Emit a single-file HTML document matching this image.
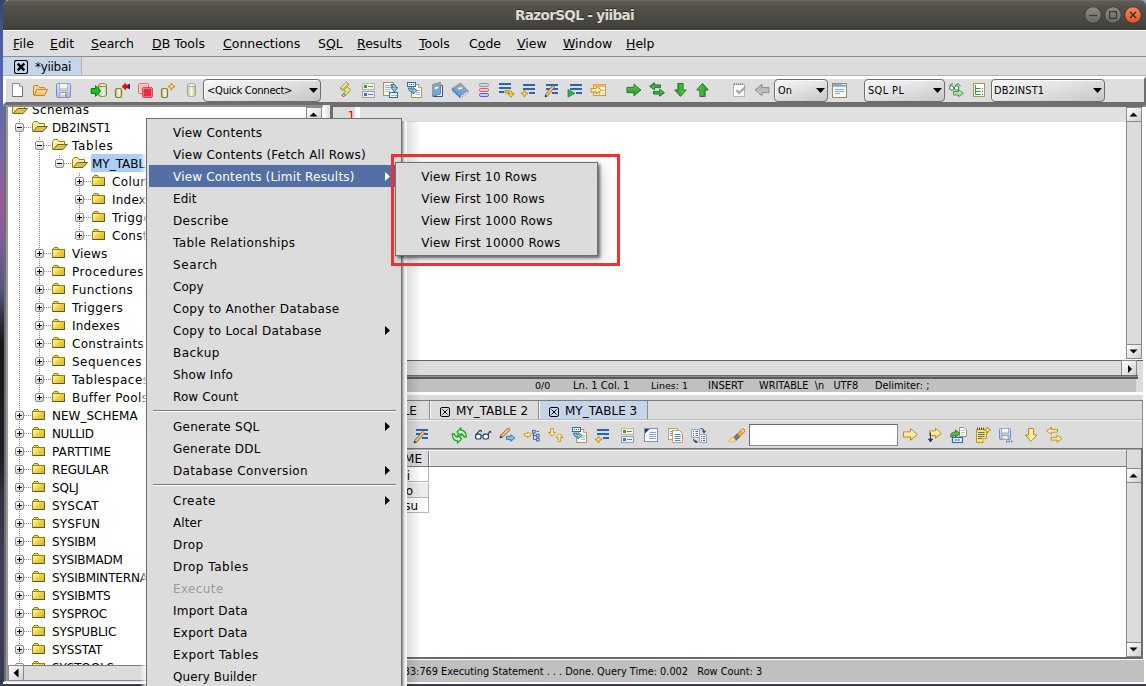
<!DOCTYPE html><html><head><meta charset="utf-8"><title>RazorSQL - yiibai</title><style>
*{box-sizing:border-box}
html,body{margin:0;padding:0}
body{width:1146px;height:686px;overflow:hidden;position:relative;background:#dcdcdc;font-family:"DejaVu Sans","Liberation Sans",sans-serif;font-size:13px;color:#000}
.a{position:absolute}
.t{position:absolute;white-space:nowrap;line-height:1}
.pm{font-size:12px;letter-spacing:.26px}
u{text-decoration:underline;text-underline-offset:1px}
</style></head><body>
<svg width="0" height="0" style="position:absolute"><defs>
<linearGradient id="gGreen" x1="0" y1="0" x2="0" y2="1"><stop offset="0" stop-color="#7fd36a"/><stop offset=".5" stop-color="#3fae3a"/><stop offset="1" stop-color="#2f9a30"/></linearGradient>
<linearGradient id="gYel" x1="0" y1="0" x2="0" y2="1"><stop offset="0" stop-color="#fffdf0"/><stop offset=".45" stop-color="#fff0b4"/><stop offset="1" stop-color="#f6c23e"/></linearGradient>
<linearGradient id="gGray" x1="0" y1="0" x2="0" y2="1"><stop offset="0" stop-color="#d0d0d0"/><stop offset="1" stop-color="#a8a8a8"/></linearGradient>
<linearGradient id="gCyl" x1="0" y1="0" x2="1" y2="0"><stop offset="0" stop-color="#b8b8b8"/><stop offset=".6" stop-color="#f6f6f6"/><stop offset="1" stop-color="#c0c0c0"/></linearGradient>
<linearGradient id="gCyl2" x1="0" y1="0" x2="1" y2="0"><stop offset="0" stop-color="#c8c8a0"/><stop offset=".5" stop-color="#fafae6"/><stop offset="1" stop-color="#b8b890"/></linearGradient>
<linearGradient id="gSave" x1="0" y1="0" x2="0" y2="1"><stop offset="0" stop-color="#dbe6f5"/><stop offset="1" stop-color="#a9c0e2"/></linearGradient>
<linearGradient id="gFold" x1="0" y1="0" x2="0" y2="1"><stop offset="0" stop-color="#fde2a6"/><stop offset="1" stop-color="#f4b85a"/></linearGradient>
<linearGradient id="gBtn" x1="0" y1="0" x2="1" y2="1"><stop offset="0" stop-color="#ffffff"/><stop offset="1" stop-color="#cccccc"/></linearGradient>
<linearGradient id="gBlue" x1="0" y1="0" x2="0" y2="1"><stop offset="0" stop-color="#8fc0ee"/><stop offset="1" stop-color="#4f8fd6"/></linearGradient>
<linearGradient id="gTeal" x1="0" y1="0" x2="0" y2="1"><stop offset="0" stop-color="#7fb4dc"/><stop offset="1" stop-color="#a8dcb0"/></linearGradient>
<linearGradient id="fc" gradientUnits="userSpaceOnUse" x1="1" y1="2.5" x2="9" y2="10.5"><stop offset="0" stop-color="#ffffff"/><stop offset=".18" stop-color="#fff36a"/><stop offset=".4" stop-color="#ffdc9a"/><stop offset=".5" stop-color="#f4d648"/><stop offset="1" stop-color="#dcbc3c"/></linearGradient>
<linearGradient id="tg" x1="0" y1="0" x2="0" y2="1"><stop offset="0" stop-color="#fff"/><stop offset="1" stop-color="#d6d2c6"/></linearGradient>
</defs></svg>
<div class="a" style="left:0;top:0;width:6px;height:686px;background:linear-gradient(#33446e 0,#42538c 4%,#4c5fa2 6%,#5a68aa 14%,#7668aa 22%,#9a5c98 30%,#7a5c98 36%,#54587e 42%,#2a2c38 47%,#16161c 50%,#1c1c24 66%,#34303f 72%,#403b52 80%,#3c4058 90%,#343a50 100%)"></div>
<div class="a" style="left:1140px;top:0;width:6px;height:10px;background:#8fa0d0"></div>
<div class="a" style="left:3px;top:0;width:1143px;height:30px;border-radius:6px 6px 0 0;background:linear-gradient(#5f5c55 0,#55524b 20%,#403f3a 100%);border-top:1px solid #6a675f"></div>
<div class="t" style="left:3px;width:1143px;top:8.5px;text-align:center;font-weight:bold;font-size:13.6px;letter-spacing:-.68px;color:#dfdbd2;text-shadow:0 -1px 0 #2a2925">RazorSQL - yiibai</div>
<svg class="a" style="left:1083px;top:5px" width="20" height="20" viewBox="0 0 20 20"><defs><linearGradient id="ggmin" x1="0" y1="0" x2="0" y2="1"><stop offset="0" stop-color="#8d8a82"/><stop offset="1" stop-color="#6b6962"/></linearGradient></defs><circle cx="10" cy="10" r="8.6" fill="#3a3934"/><circle cx="10" cy="10" r="7.8" fill="url(#ggmin)"/><path d="M6 10.5H14" stroke="#3c3b37" stroke-width="1.3"/></svg>
<svg class="a" style="left:1103px;top:5px" width="20" height="20" viewBox="0 0 20 20"><defs><linearGradient id="ggmax" x1="0" y1="0" x2="0" y2="1"><stop offset="0" stop-color="#8d8a82"/><stop offset="1" stop-color="#6b6962"/></linearGradient></defs><circle cx="10" cy="10" r="8.6" fill="#3a3934"/><circle cx="10" cy="10" r="7.8" fill="url(#ggmax)"/><rect x="6.6" y="6.6" width="6.8" height="6.8" fill="none" stroke="#3c3b37" stroke-width="1.3"/></svg>
<svg class="a" style="left:1123px;top:5px" width="20" height="20" viewBox="0 0 20 20"><defs><linearGradient id="gc" x1="0" y1="0" x2="0" y2="1"><stop offset="0" stop-color="#f08763"/><stop offset="1" stop-color="#e8541e"/></linearGradient></defs><circle cx="10" cy="10" r="8.6" fill="#3a3934"/><circle cx="10" cy="10" r="7.8" fill="url(#gc)"/><path d="M7 7L13 13M13 7L7 13" stroke="#3c2a1c" stroke-width="1.3" fill="none"/></svg>
<div class="a" style="left:3px;top:30px;width:1143px;height:26px;background:#dedede;border-top:1px solid #fff"></div>
<div class="a" style="left:3px;top:56px;width:1143px;height:1px;background:#8c8c8c"></div>
<div class="t" style="left:13px;top:37.5px;font-size:12.5px"><u>F</u>ile</div>
<div class="t" style="left:50px;top:37.5px;font-size:12.5px"><u>E</u>dit</div>
<div class="t" style="left:91px;top:37.5px;font-size:12.5px"><u>S</u>earch</div>
<div class="t" style="left:152px;top:37.5px;font-size:12.5px"><u>D</u>B Tools</div>
<div class="t" style="left:223px;top:37.5px;font-size:12.5px"><u>C</u>onnections</div>
<div class="t" style="left:318px;top:37.5px;font-size:12.5px">S<u>Q</u>L</div>
<div class="t" style="left:357px;top:37.5px;font-size:12.5px"><u>R</u>esults</div>
<div class="t" style="left:419px;top:37.5px;font-size:12.5px"><u>T</u>ools</div>
<div class="t" style="left:469px;top:37.5px;font-size:12.5px">C<u>o</u>de</div>
<div class="t" style="left:517px;top:37.5px;font-size:12.5px"><u>V</u>iew</div>
<div class="t" style="left:563px;top:37.5px;font-size:12.5px"><u>W</u>indow</div>
<div class="t" style="left:626px;top:37.5px;font-size:12.5px"><u>H</u>elp</div>
<div class="a" style="left:3px;top:57px;width:79px;height:18px;background:#c5d6eb;border-right:1px solid #a9b4c2"></div>
<div class="a" style="left:3px;top:75px;width:1143px;height:1px;background:#b4b4b4"></div>
<svg class="a" style="left:14px;top:60px" width="14" height="14" viewBox="0 0 14 14"><rect x=".5" y=".5" width="13" height="13" rx="2" fill="none" stroke="#000" stroke-width="1.1"/><path d="M3.7 3.7L10.3 10.3M10.3 3.7L3.7 10.3" stroke="#000" stroke-width="2.4"/></svg>
<div class="t" style="left:35px;top:61px;font-size:12px;letter-spacing:-.3px">*yiibai</div>
<div class="a" style="left:3px;top:76px;width:1143px;height:29px;background:#dedede;border-top:3px solid #fff;border-left:3px solid #fff;border-bottom:3px solid #6e6e6e;border-right:2px solid #6e6e6e"></div>
<div class="a" style="left:203px;top:79px;width:118px;height:23px;border:1px solid #6e6e6e;border-radius:4px;background:linear-gradient(165deg,#f8f8f8 0,#e4e4e4 45%,#c6c6c6 100%);box-shadow:inset 1px 1px 0 rgba(255,255,255,.8)"></div>
<div class="t" style="left:207px;top:86px;font-size:10px;letter-spacing:-0.29px">&lt;Quick Connect&gt;</div>
<svg class="a" style="left:309px;top:88px" width="9" height="5"><path d="M0 0H9L4.5 5Z" fill="#000"/></svg>
<div class="a" style="left:774px;top:79px;width:54px;height:23px;border:1px solid #6e6e6e;border-radius:4px;background:linear-gradient(165deg,#f8f8f8 0,#e4e4e4 45%,#c6c6c6 100%);box-shadow:inset 1px 1px 0 rgba(255,255,255,.8)"></div>
<div class="t" style="left:778px;top:86px;font-size:9.8px;letter-spacing:0px">On</div>
<svg class="a" style="left:816px;top:88px" width="9" height="5"><path d="M0 0H9L4.5 5Z" fill="#000"/></svg>
<div class="a" style="left:864px;top:79px;width:81px;height:23px;border:1px solid #6e6e6e;border-radius:4px;background:linear-gradient(165deg,#f8f8f8 0,#e4e4e4 45%,#c6c6c6 100%);box-shadow:inset 1px 1px 0 rgba(255,255,255,.8)"></div>
<div class="t" style="left:868px;top:86px;font-size:9.8px;letter-spacing:0.4px">SQL PL</div>
<svg class="a" style="left:933px;top:88px" width="9" height="5"><path d="M0 0H9L4.5 5Z" fill="#000"/></svg>
<div class="a" style="left:991px;top:79px;width:114px;height:23px;border:1px solid #6e6e6e;border-radius:4px;background:linear-gradient(165deg,#f8f8f8 0,#e4e4e4 45%,#c6c6c6 100%);box-shadow:inset 1px 1px 0 rgba(255,255,255,.8)"></div>
<div class="t" style="left:994px;top:86px;font-size:9.8px;letter-spacing:0.12px">DB2INST1</div>
<svg class="a" style="left:1093px;top:88px" width="9" height="5"><path d="M0 0H9L4.5 5Z" fill="#000"/></svg>
<svg class="a" style="left:12px;top:83px" width="11" height="14" viewBox="0 0 11 14"><path d="M.5 .5H7.5L10.5 3.5V13.5H.5Z" fill="#fff" stroke="#8c8c8c"/><path d="M7.5 .5V3.5H10.5" fill="#dfe6f2" stroke="#9a9a9a"/><path d="M.5 13.5H10.5V4" fill="none" stroke="#6e6e6e"/></svg><svg class="a" style="left:33px;top:85px" width="15" height="11" viewBox="0 0 15 11"><path d="M.5 10V2Q.5 .5 2 .5H5L6.5 2.5H11Q12 2.5 12 3.5V5" fill="#f9d38a" stroke="#c4872c"/><path d="M1 10.5L4 4.5H14.5L11.5 10.5Z" fill="url(#gFold)" stroke="#c4872c" stroke-linejoin="round"/></svg><svg class="a" style="left:56px;top:83px" width="15" height="15" viewBox="0 0 15 15"><rect x=".5" y=".5" width="14" height="14" rx="1.2" fill="url(#gSave)" stroke="#6d8ec4"/><rect x="3.5" y=".5" width="8" height="6.5" fill="#f6f8fc" stroke="#8aa4cc" stroke-width=".8"/><rect x="4" y="5" width="7" height="1.5" fill="#e8cf9a"/><rect x="4" y="9.5" width="7" height="5" fill="#f4f6fb" stroke="#7d98c6" stroke-width=".8"/><rect x="5" y="12" width="3.5" height="2" fill="#e8c77a"/><rect x="9" y="10.5" width="1.5" height="3.5" fill="#8a8a6a"/></svg><svg class="a" style="left:90px;top:82px" width="18" height="16" viewBox="0 0 18 16"><path d="M8.5 3.1V12.9A4.0 1.6 0 0 0 16.5 12.9V3.1" fill="url(#gCyl)" stroke="#8a8200"/><ellipse cx="12.5" cy="3.1" rx="4.0" ry="1.6" fill="#f4f4ea" stroke="#8a8200"/><path d="M1.2 6.5H5.5V3.6L10.6 9L5.5 14.4V11.5H1.2Z" fill="#0fc81a" stroke="#0a6a10" stroke-width=".9" stroke-linejoin="round"/></svg><svg class="a" style="left:114px;top:82px" width="17" height="17" viewBox="0 0 17 17"><rect x="1.5" y="6.5" width="6.0" height="9.0" rx="2" ry="1.6" fill="url(#gCyl)" stroke="#8a8200" stroke-width="1.2"/><path d="M8 4.5L11.5 1.2V3H15.5V6H11.5V7.8Z" fill="#f01010" stroke="#801010" stroke-width=".6"/><rect x="14.5" y="2" width="1.5" height="5" fill="#1a1a8a"/></svg><svg class="a" style="left:137px;top:82px" width="17" height="17" viewBox="0 0 17 17"><rect x="1.5" y="1.5" width="10" height="10" rx="1.5" fill="#f7b4b8" stroke="#e46a72"/><rect x="2.5" y="2.5" width="8" height="8" fill="none" stroke="#fbdadc"/><rect x="5.5" y="5.5" width="10" height="10" rx="1.5" fill="#e62e40" stroke="#e2485a"/><rect x="6.5" y="6.5" width="8" height="8" fill="none" stroke="#f07a86" stroke-width=".8"/></svg><svg class="a" style="left:160px;top:82px" width="17" height="17" viewBox="0 0 17 17"><rect x="1.5" y="6.5" width="6.0" height="9.0" rx="2" ry="1.6" fill="url(#gCyl)" stroke="#8a8200" stroke-width="1.2"/><path d="M11.5 0.9L12.6 3.4L15.1 4.5L12.6 5.6L11.5 8.1L10.4 5.6L7.9 4.5L10.4 3.4Z" fill="#f4c23c" stroke="#b8861a" stroke-width=".8"/><circle cx="11.5" cy="4.5" r="1" fill="#fff8d8"/></svg><svg class="a" style="left:186px;top:82px" width="11" height="16" viewBox="0 0 11 16"><path d="M1.5 3.1V12.9A4.0 1.6 0 0 0 9.5 12.9V3.1" fill="url(#gCyl2)" stroke="#a4a484"/><ellipse cx="5.5" cy="3.1" rx="4.0" ry="1.6" fill="#f4f4ea" stroke="#a4a484"/></svg><svg class="a" style="left:339px;top:81px" width="13" height="17" viewBox="0 0 13 17"><path d="M4 9L8.5 6L11.5 8.5L11 10.5L6.5 14L4.5 12.5L6.5 10.5Z" fill="#efe25c" stroke="#3c4c8c" stroke-width=".9" stroke-dasharray="1 .8"/><path d="M1.5 6.5L7.5 1L9.500 2.500V4.500L3.800 9.500L1.500 8Z" fill="#e6ecb0" stroke="#a08a34" stroke-width=".9" stroke-linejoin="round"/><path d="M1.500 6.500L3.800 8L9.500 2.800" fill="none" stroke="#a08a34" stroke-width=".7"/><rect x="3.300" y="12.800" width="2.600" height="2.600" fill="#f6e23c" stroke="#3c4c8c" stroke-width=".8" transform="rotate(45 4.600 14.100)"/></svg><svg class="a" style="left:362px;top:83px" width="13" height="15" viewBox="0 0 13 15" shape-rendering="crispEdges"><rect x=".5" y=".5" width="12" height="6" fill="#eef6f2" stroke="#c8b888"/><rect x="2" y="2" width="3" height="3" fill="#2e9e3e"/><rect x="6" y="3" width="5" height="1" fill="#3aa84a"/><rect x=".5" y="8.5" width="12" height="6" fill="#eaf0f8" stroke="#8ea4c6"/><rect x="2" y="10" width="3" height="3" fill="#5e6ea4"/><rect x="6" y="11" width="5" height="1" fill="#6a7ab0"/></svg><svg class="a" style="left:383px;top:82px" width="15" height="16" viewBox="0 0 15 16"><rect x=".5" y=".5" width="10" height="13" fill="#fff" stroke="#b4944c"/><path d="M2 3.5H8M2 5.5H8M2 7.5H8M2 9.5H7" stroke="#9ab8dc" stroke-width="1"/><path d="M8 2.5H11.5Q13 3 13 5.5H14.5L11.5 10L8 5.5H10Q10 4 8 4Z" fill="url(#gTeal)" stroke="#2468ac" stroke-width=".9" stroke-linejoin="round"/><rect x="6.5" y="10.5" width="8" height="5" fill="#fff" stroke="#2e6cb4"/><path d="M8.5 13.5H9.5M10.5 13.5H11.5M12.5 13.5H13.5" stroke="#2e6cb4"/></svg><svg class="a" style="left:407px;top:82px" width="15" height="16" viewBox="0 0 15 16"><path d="M4.5 2.5H11.5L14.5 5.5V15.5H4.5Z" fill="#fff" stroke="#b4944c"/><path d="M11.5 2.5V5.5H14.5" fill="#f4e8c8" stroke="#b4944c" stroke-width=".8"/><path d="M9 8.5H13M9 10.5H13M9 12.5H13" stroke="#9ab8dc"/><rect x=".5" y=".5" width="8" height="4" fill="#fff" stroke="#2e6cb4"/><path d="M2 2.5H3M4 2.5H5M6 2.5H7" stroke="#2e6cb4"/><path d="M1.5 6Q1.5 10 6 10V12L10 8.5L6 5.5V7.5Q4 7.5 3.5 6Z" fill="url(#gTeal)" stroke="#2468ac" stroke-width=".9" stroke-linejoin="round"/></svg><svg class="a" style="left:431px;top:81px" width="13" height="17" viewBox="0 0 13 17"><path d="M9.500 4L11.500 4.500V15.500H2.500L1.500 15" fill="#fff" stroke="#2a3a5a" stroke-width=".9"/><path d="M1.500 3.500L9.500 1.200V13L1.500 15Z" fill="#6aa8f0" stroke="#a89264" stroke-width=".9" stroke-linejoin="round"/><path d="M1.500 15L9.500 13V4" fill="none" stroke="#4a7cc0" stroke-width=".8"/><rect x="3.300" y="5.500" width="4.500" height="2.600" fill="#fff" stroke="#b8a06a" stroke-width=".8" transform="skewY(-14)" transform-origin="5.500 6.800"/></svg><svg class="a" style="left:451px;top:82px" width="18" height="16" viewBox="0 0 18 16"><path d="M9 14.500L17 9V11L9.500 15.800Z" fill="#fff" stroke="#3a4a6a" stroke-width=".8" stroke-dasharray="1 1"/><path d="M1.200 6.500L9.500 1L17 8.500L8.800 14.200Z" fill="#6aa8f0" stroke="#a89264" stroke-width=".9" stroke-linejoin="round"/><path d="M1.200 6.500V8.500L9 15.800V14.200Z" fill="#4f8fe0" stroke="#4a7cc0" stroke-width=".7"/><path d="M3 6.200L10 12.500" stroke="#3e78c8" stroke-width=".8" stroke-dasharray="1 1"/><rect x="6.800" y="5" width="4.600" height="2.600" fill="#fff" stroke="#b8a06a" stroke-width=".8" transform="rotate(-12 9 6.300)"/></svg><svg class="a" style="left:479px;top:83px" width="10" height="14" viewBox="0 0 10 14"><rect x=".5" y=".5" width="9" height="3" rx="1.3" fill="#dcdcc4" stroke="#8494c4"/><rect x=".5" y="5.5" width="9" height="3" rx="1.3" fill="#f8c4c4" stroke="#d4605e"/><rect x=".5" y="10.5" width="9" height="3" rx="1.3" fill="#c4ccf8" stroke="#4e5ee0"/></svg><svg class="a" style="left:499px;top:83px" width="16" height="15" viewBox="0 0 16 15"><rect x="0" y="0" width="12" height="2" fill="#2a64b4"/><rect x="0" y="4" width="12" height="2" fill="#2a64b4"/><rect x="0" y="8" width="5" height="2" fill="#2a64b4"/><path d="M6 7.5H9.5Q13.5 7.5 13.5 10.5L15.2 10.5L12 14.3L8.5 10.5H10.5Q10.5 9.8 9.5 9.8H6Z" fill="#f6c644" stroke="#b07c18" stroke-width=".8" stroke-linejoin="round"/></svg><svg class="a" style="left:520px;top:83px" width="16" height="15" viewBox="0 0 16 15"><rect x="3" y="1" width="12" height="2" fill="#2a64b4"/><rect x="3" y="5" width="12" height="2" fill="#2a64b4"/><rect x="9" y="9" width="6" height="2" fill="#2a64b4"/><path d="M4.5 6.9L5.6 9.4L8.1 10.5L5.6 11.6L4.5 14.1L3.4 11.6L0.9 10.5L3.4 9.4Z" fill="#f4c23c" stroke="#b8861a" stroke-width=".8"/><circle cx="4.5" cy="10.5" r="1" fill="#fff8d8"/></svg><svg class="a" style="left:544px;top:83px" width="15" height="15" viewBox="0 0 15 15"><rect x="2" y="1" width="12" height="2" fill="#2a64b4"/><rect x="2" y="5" width="12" height="2" fill="#2a64b4"/><rect x="8" y="9" width="6" height="2" fill="#2a64b4"/><path d="M2.5 12.3L9.0 4.0" stroke="#8a6a3a" stroke-width="3.4" stroke-linecap="round"/><path d="M2.7 12.1L9.0 4.0" stroke="#f0c67a" stroke-width="2" stroke-linecap="round"/><path d="M1.5 13.5L2.1 12.8" stroke="#1e3a6e" stroke-width="1.6" stroke-linecap="round"/></svg><svg class="a" style="left:567px;top:83px" width="16" height="15" viewBox="0 0 16 15"><rect x="3" y="1" width="12" height="2" fill="#2a64b4"/><rect x="3" y="5" width="12" height="2" fill="#2a64b4"/><rect x="9" y="9" width="6" height="2" fill="#2a64b4"/><path d="M1 6.5L8 10.3L1 14.2Z" fill="#34a852" stroke="#1e7a36" stroke-width=".7"/></svg><svg class="a" style="left:590px;top:83px" width="17" height="14" viewBox="0 0 17 14"><rect x="3.5" y="1.5" width="12" height="11" fill="#fff" stroke="#e0922e"/><rect x="3.5" y="1.5" width="12" height="2.5" fill="#f4b45a"/><path d="M3.5 7.5H15.5M3.5 10H15.5M9.5 4V12.5" stroke="#e4a85a" stroke-width=".8"/><g transform="translate(0.5,3)"><path d="M.5 2.5H6.0V.7L11.4 4.2L6.0 7.8V6.0H.5Z" fill="url(#gYel)" stroke="#b8861a" stroke-width="0.8" stroke-linejoin="round"/></g></svg><svg class="a" style="left:626px;top:83px" width="16" height="14" viewBox="0 0 16 14"><g transform="translate(.5,.5)"><path d="M.5 3.9H7.5V.7L14.4 6.5L7.5 12.3V9.1H.5Z" fill="url(#gGreen)" stroke="#1f7a22" stroke-width="1" stroke-linejoin="round"/></g></svg><svg class="a" style="left:648px;top:81px" width="18" height="17" viewBox="0 0 18 17"><g transform="translate(1,.5) rotate(180 6 4.5)"><path d="M.5 2.9H6.6V.7L11.4 4.2L6.6 7.8V5.6H.5Z" fill="url(#gGreen)" stroke="#1f7a22" stroke-width="1" stroke-linejoin="round"/></g><g transform="translate(5,7.5)"><path d="M.5 2.9H6.6V.7L11.4 4.2L6.6 7.8V5.6H.5Z" fill="url(#gGreen)" stroke="#1f7a22" stroke-width="1" stroke-linejoin="round"/></g></svg><svg class="a" style="left:673px;top:82px" width="14" height="16" viewBox="0 0 14 16"><g transform="translate(0,1) rotate(90 7 7)"><path d="M.5 3.9H7.0V.7L13.4 6.5L7.0 12.3V9.1H.5Z" fill="url(#gGreen)" stroke="#1f7a22" stroke-width="1" stroke-linejoin="round"/></g></svg><svg class="a" style="left:696px;top:82px" width="14" height="16" viewBox="0 0 14 16"><g transform="translate(0,1) rotate(-90 7 7)"><path d="M.5 3.9H7.0V.7L13.4 6.5L7.0 12.3V9.1H.5Z" fill="url(#gGreen)" stroke="#1f7a22" stroke-width="1" stroke-linejoin="round"/></g></svg><svg class="a" style="left:733px;top:82px" width="14" height="15" viewBox="0 0 14 15"><rect x=".5" y="2.5" width="11" height="12" fill="#fbfbfb" stroke="#b4b4b4"/><path d="M1.5 1V3M3.5 1V3M5.5 1V3M7.5 1V3M9.5 1V3" stroke="#8a8a8a" stroke-width=".9"/><path d="M3.5 8L6 11L12.5 5" fill="none" stroke="#a6a6a6" stroke-width="2.2"/></svg><svg class="a" style="left:754px;top:83px" width="16" height="14" viewBox="0 0 16 14"><g transform="translate(.5,.5) rotate(180 7.5 6.5)"><path d="M.5 3.9H7.5V.7L14.4 6.5L7.5 12.3V9.1H.5Z" fill="url(#gGray)" stroke="#8e8e8e" stroke-width="1" stroke-linejoin="round"/></g></svg><svg class="a" style="left:832px;top:83px" width="15" height="15" viewBox="0 0 15 15"><rect x=".5" y=".5" width="14" height="14" fill="#f4faff" stroke="#a08a58"/><rect x="1" y="1" width="13" height="2.5" fill="url(#gBlue)"/><rect x="10" y="1" width="4" height="1.2" fill="#d6ecfc"/><path d="M3 6.5H12M3 8.5H12M3 10.5H8" stroke="#8aa4c8"/></svg><svg class="a" style="left:948px;top:82px" width="17" height="16" viewBox="0 0 17 16"><circle cx="3.7" cy="6" r="2.2" fill="#fff" stroke="#2e7e42"/><circle cx="8.6" cy="6" r="2.2" fill="#fff" stroke="#2e7e42"/><path d="M1.8 4.5Q2.5 1 5 1.5M7 4.2Q8.5 1.3 10.5 2Q12.3 2.5 12 4.5" fill="none" stroke="#2e7e42" stroke-width=".9"/><g transform="translate(5,7)"><path d="M.5 2.5H5.5V.7L10.4 4.2L5.5 7.8V6.0H.5Z" fill="#b8dca0" stroke="#2aa03c" stroke-width="0.9" stroke-linejoin="round"/></g></svg><svg class="a" style="left:973px;top:83px" width="12" height="14" viewBox="0 0 12 14"><rect x=".5" y=".5" width="11" height="13" fill="#fbfdff" stroke="#b8924a"/><path d="M2.5 2V11.5M2.5 5.5H7.5M2.5 8.5H7.5M2.5 11.5H7.5" fill="none" stroke="#2e9a52"/><path d="M9 5.5H10M9 8.5H10M9 11.5H10" stroke="#2e9a52"/></svg>
<div class="a" style="left:3px;top:105px;width:1143px;height:2px;background:#868686"></div>
<div class="a" style="left:4px;top:105px;width:319px;height:578px;background:#fff;border-left:2px solid #6e6e6e;border-top:2px solid #8c8c8c"></div>
<div class="a" style="left:6px;top:105px;width:2px;height:576px;background:#9a9a9a"></div>
<div class="a" style="left:7px;top:107px;width:299px;height:558px;overflow:hidden">
<div class="a" style="left:12px;top:12px;width:1px;height:561px;background-image:linear-gradient(#8c8c8c 50%,transparent 50%);background-size:1px 2px"></div>
<div class="a" style="left:32px;top:30px;width:1px;height:265px;background-image:linear-gradient(#8c8c8c 50%,transparent 50%);background-size:1px 2px"></div>
<div class="a" style="left:52px;top:48px;width:1px;height:4px;background-image:linear-gradient(#8c8c8c 50%,transparent 50%);background-size:1px 2px"></div>
<div class="a" style="left:72px;top:66px;width:1px;height:67px;background-image:linear-gradient(#8c8c8c 50%,transparent 50%);background-size:1px 2px"></div>
<svg class="a" style="left:5px;top:-4px" width="16" height="11" viewBox="0 0 16 11"><path d="M0.5 10.5V2.5L2 0.5H5.5L7 2.5H12.5V5.5" fill="#fcf0a8" stroke="#8e8600"/><path d="M1.2 10.5L5.5 5.5H15.5L11 10.5Z" fill="#dfc040" stroke="#5a5630" stroke-width=".9"/></svg>
<div class="t" style="left:25px;top:-3px;font-size:12px;letter-spacing:0.4px">Schemas</div>
<div class="a" style="left:17px;top:20px;width:7px;height:1px;background-image:linear-gradient(90deg,#8c8c8c 50%,transparent 50%);background-size:2px 1px"></div>
<svg class="a" style="left:8px;top:16px" width="9" height="9" viewBox="0 0 9 9"><rect x=".5" y=".5" width="8" height="8" rx="1.5" fill="url(#tg)" stroke="#8c8c8c"/><rect x="2" y="4" width="5" height="1" fill="#000"/></svg>
<svg class="a" style="left:25px;top:14px" width="16" height="11" viewBox="0 0 16 11"><path d="M0.5 10.5V2.5L2 0.5H5.5L7 2.5H12.5V5.5" fill="#fcf0a8" stroke="#8e8600"/><path d="M1.2 10.5L5.5 5.5H15.5L11 10.5Z" fill="#dfc040" stroke="#5a5630" stroke-width=".9"/></svg>
<div class="t" style="left:45px;top:15px;font-size:12px;letter-spacing:-0.18px">DB2INST1</div>
<div class="a" style="left:37px;top:38px;width:7px;height:1px;background-image:linear-gradient(90deg,#8c8c8c 50%,transparent 50%);background-size:2px 1px"></div>
<svg class="a" style="left:28px;top:34px" width="9" height="9" viewBox="0 0 9 9"><rect x=".5" y=".5" width="8" height="8" rx="1.5" fill="url(#tg)" stroke="#8c8c8c"/><rect x="2" y="4" width="5" height="1" fill="#000"/></svg>
<svg class="a" style="left:45px;top:32px" width="16" height="11" viewBox="0 0 16 11"><path d="M0.5 10.5V2.5L2 0.5H5.5L7 2.5H12.5V5.5" fill="#fcf0a8" stroke="#8e8600"/><path d="M1.2 10.5L5.5 5.5H15.5L11 10.5Z" fill="#dfc040" stroke="#5a5630" stroke-width=".9"/></svg>
<div class="t" style="left:65px;top:33px;font-size:12px;letter-spacing:0.7px">Tables</div>
<div class="a" style="left:57px;top:56px;width:7px;height:1px;background-image:linear-gradient(90deg,#8c8c8c 50%,transparent 50%);background-size:2px 1px"></div>
<svg class="a" style="left:48px;top:52px" width="9" height="9" viewBox="0 0 9 9"><rect x=".5" y=".5" width="8" height="8" rx="1.5" fill="url(#tg)" stroke="#8c8c8c"/><rect x="2" y="4" width="5" height="1" fill="#000"/></svg>
<svg class="a" style="left:65px;top:50px" width="16" height="11" viewBox="0 0 16 11"><path d="M0.5 10.5V2.5L2 0.5H5.5L7 2.5H12.5V5.5" fill="#fcf0a8" stroke="#8e8600"/><path d="M1.2 10.5L5.5 5.5H15.5L11 10.5Z" fill="#dfc040" stroke="#5a5630" stroke-width=".9"/></svg>
<div class="a" style="left:84px;top:47px;width:70px;height:18px;background:#abcef4"></div>
<div class="t" style="left:85px;top:51px;font-size:12px;letter-spacing:0px">MY_TABLE</div>
<div class="a" style="left:77px;top:74px;width:7px;height:1px;background-image:linear-gradient(90deg,#8c8c8c 50%,transparent 50%);background-size:2px 1px"></div>
<svg class="a" style="left:68px;top:70px" width="9" height="9" viewBox="0 0 9 9"><rect x=".5" y=".5" width="8" height="8" rx="1.5" fill="url(#tg)" stroke="#8c8c8c"/><rect x="2" y="4" width="5" height="1" fill="#000"/><rect x="4" y="2" width="1" height="5" fill="#000"/></svg>
<svg class="a" style="left:85px;top:68px" width="13" height="11" viewBox="0 0 13 11" shape-rendering="crispEdges"><rect x="2" y="0" width="4" height="1" fill="#8e8600"/><rect x="1" y="1" width="6" height="1" fill="#e8d56a"/><rect x="1" y="1" width="1" height="1" fill="#8e8a40"/><rect x="6" y="1" width="1" height="1" fill="#8e8a40"/><rect x="0" y="2" width="13" height="9" fill="#8e8600"/><rect x="1" y="3" width="11" height="7" fill="url(#fc)"/><rect x="1" y="10" width="12" height="1" fill="#5e5a2c"/><rect x="12" y="3" width="1" height="8" fill="#6a6428"/></svg>
<div class="t" style="left:105px;top:69px;font-size:12px;letter-spacing:0.4px">Columns</div>
<div class="a" style="left:77px;top:92px;width:7px;height:1px;background-image:linear-gradient(90deg,#8c8c8c 50%,transparent 50%);background-size:2px 1px"></div>
<svg class="a" style="left:68px;top:88px" width="9" height="9" viewBox="0 0 9 9"><rect x=".5" y=".5" width="8" height="8" rx="1.5" fill="url(#tg)" stroke="#8c8c8c"/><rect x="2" y="4" width="5" height="1" fill="#000"/><rect x="4" y="2" width="1" height="5" fill="#000"/></svg>
<svg class="a" style="left:85px;top:86px" width="13" height="11" viewBox="0 0 13 11" shape-rendering="crispEdges"><rect x="2" y="0" width="4" height="1" fill="#8e8600"/><rect x="1" y="1" width="6" height="1" fill="#e8d56a"/><rect x="1" y="1" width="1" height="1" fill="#8e8a40"/><rect x="6" y="1" width="1" height="1" fill="#8e8a40"/><rect x="0" y="2" width="13" height="9" fill="#8e8600"/><rect x="1" y="3" width="11" height="7" fill="url(#fc)"/><rect x="1" y="10" width="12" height="1" fill="#5e5a2c"/><rect x="12" y="3" width="1" height="8" fill="#6a6428"/></svg>
<div class="t" style="left:105px;top:87px;font-size:12px;letter-spacing:0.23px">Indexes</div>
<div class="a" style="left:77px;top:110px;width:7px;height:1px;background-image:linear-gradient(90deg,#8c8c8c 50%,transparent 50%);background-size:2px 1px"></div>
<svg class="a" style="left:68px;top:106px" width="9" height="9" viewBox="0 0 9 9"><rect x=".5" y=".5" width="8" height="8" rx="1.5" fill="url(#tg)" stroke="#8c8c8c"/><rect x="2" y="4" width="5" height="1" fill="#000"/><rect x="4" y="2" width="1" height="5" fill="#000"/></svg>
<svg class="a" style="left:85px;top:104px" width="13" height="11" viewBox="0 0 13 11" shape-rendering="crispEdges"><rect x="2" y="0" width="4" height="1" fill="#8e8600"/><rect x="1" y="1" width="6" height="1" fill="#e8d56a"/><rect x="1" y="1" width="1" height="1" fill="#8e8a40"/><rect x="6" y="1" width="1" height="1" fill="#8e8a40"/><rect x="0" y="2" width="13" height="9" fill="#8e8600"/><rect x="1" y="3" width="11" height="7" fill="url(#fc)"/><rect x="1" y="10" width="12" height="1" fill="#5e5a2c"/><rect x="12" y="3" width="1" height="8" fill="#6a6428"/></svg>
<div class="t" style="left:105px;top:105px;font-size:12px;letter-spacing:0.46px">Triggers</div>
<div class="a" style="left:77px;top:128px;width:7px;height:1px;background-image:linear-gradient(90deg,#8c8c8c 50%,transparent 50%);background-size:2px 1px"></div>
<svg class="a" style="left:68px;top:124px" width="9" height="9" viewBox="0 0 9 9"><rect x=".5" y=".5" width="8" height="8" rx="1.5" fill="url(#tg)" stroke="#8c8c8c"/><rect x="2" y="4" width="5" height="1" fill="#000"/><rect x="4" y="2" width="1" height="5" fill="#000"/></svg>
<svg class="a" style="left:85px;top:122px" width="13" height="11" viewBox="0 0 13 11" shape-rendering="crispEdges"><rect x="2" y="0" width="4" height="1" fill="#8e8600"/><rect x="1" y="1" width="6" height="1" fill="#e8d56a"/><rect x="1" y="1" width="1" height="1" fill="#8e8a40"/><rect x="6" y="1" width="1" height="1" fill="#8e8a40"/><rect x="0" y="2" width="13" height="9" fill="#8e8600"/><rect x="1" y="3" width="11" height="7" fill="url(#fc)"/><rect x="1" y="10" width="12" height="1" fill="#5e5a2c"/><rect x="12" y="3" width="1" height="8" fill="#6a6428"/></svg>
<div class="t" style="left:105px;top:123px;font-size:12px;letter-spacing:0.32px">Constraints</div>
<div class="a" style="left:37px;top:146px;width:7px;height:1px;background-image:linear-gradient(90deg,#8c8c8c 50%,transparent 50%);background-size:2px 1px"></div>
<svg class="a" style="left:28px;top:142px" width="9" height="9" viewBox="0 0 9 9"><rect x=".5" y=".5" width="8" height="8" rx="1.5" fill="url(#tg)" stroke="#8c8c8c"/><rect x="2" y="4" width="5" height="1" fill="#000"/><rect x="4" y="2" width="1" height="5" fill="#000"/></svg>
<svg class="a" style="left:45px;top:140px" width="13" height="11" viewBox="0 0 13 11" shape-rendering="crispEdges"><rect x="2" y="0" width="4" height="1" fill="#8e8600"/><rect x="1" y="1" width="6" height="1" fill="#e8d56a"/><rect x="1" y="1" width="1" height="1" fill="#8e8a40"/><rect x="6" y="1" width="1" height="1" fill="#8e8a40"/><rect x="0" y="2" width="13" height="9" fill="#8e8600"/><rect x="1" y="3" width="11" height="7" fill="url(#fc)"/><rect x="1" y="10" width="12" height="1" fill="#5e5a2c"/><rect x="12" y="3" width="1" height="8" fill="#6a6428"/></svg>
<div class="t" style="left:65px;top:141px;font-size:12px;letter-spacing:0.11px">Views</div>
<div class="a" style="left:37px;top:164px;width:7px;height:1px;background-image:linear-gradient(90deg,#8c8c8c 50%,transparent 50%);background-size:2px 1px"></div>
<svg class="a" style="left:28px;top:160px" width="9" height="9" viewBox="0 0 9 9"><rect x=".5" y=".5" width="8" height="8" rx="1.5" fill="url(#tg)" stroke="#8c8c8c"/><rect x="2" y="4" width="5" height="1" fill="#000"/><rect x="4" y="2" width="1" height="5" fill="#000"/></svg>
<svg class="a" style="left:45px;top:158px" width="13" height="11" viewBox="0 0 13 11" shape-rendering="crispEdges"><rect x="2" y="0" width="4" height="1" fill="#8e8600"/><rect x="1" y="1" width="6" height="1" fill="#e8d56a"/><rect x="1" y="1" width="1" height="1" fill="#8e8a40"/><rect x="6" y="1" width="1" height="1" fill="#8e8a40"/><rect x="0" y="2" width="13" height="9" fill="#8e8600"/><rect x="1" y="3" width="11" height="7" fill="url(#fc)"/><rect x="1" y="10" width="12" height="1" fill="#5e5a2c"/><rect x="12" y="3" width="1" height="8" fill="#6a6428"/></svg>
<div class="t" style="left:65px;top:159px;font-size:12px;letter-spacing:0.55px">Procedures</div>
<div class="a" style="left:37px;top:182px;width:7px;height:1px;background-image:linear-gradient(90deg,#8c8c8c 50%,transparent 50%);background-size:2px 1px"></div>
<svg class="a" style="left:28px;top:178px" width="9" height="9" viewBox="0 0 9 9"><rect x=".5" y=".5" width="8" height="8" rx="1.5" fill="url(#tg)" stroke="#8c8c8c"/><rect x="2" y="4" width="5" height="1" fill="#000"/><rect x="4" y="2" width="1" height="5" fill="#000"/></svg>
<svg class="a" style="left:45px;top:176px" width="13" height="11" viewBox="0 0 13 11" shape-rendering="crispEdges"><rect x="2" y="0" width="4" height="1" fill="#8e8600"/><rect x="1" y="1" width="6" height="1" fill="#e8d56a"/><rect x="1" y="1" width="1" height="1" fill="#8e8a40"/><rect x="6" y="1" width="1" height="1" fill="#8e8a40"/><rect x="0" y="2" width="13" height="9" fill="#8e8600"/><rect x="1" y="3" width="11" height="7" fill="url(#fc)"/><rect x="1" y="10" width="12" height="1" fill="#5e5a2c"/><rect x="12" y="3" width="1" height="8" fill="#6a6428"/></svg>
<div class="t" style="left:65px;top:177px;font-size:12px;letter-spacing:0.44px">Functions</div>
<div class="a" style="left:37px;top:200px;width:7px;height:1px;background-image:linear-gradient(90deg,#8c8c8c 50%,transparent 50%);background-size:2px 1px"></div>
<svg class="a" style="left:28px;top:196px" width="9" height="9" viewBox="0 0 9 9"><rect x=".5" y=".5" width="8" height="8" rx="1.5" fill="url(#tg)" stroke="#8c8c8c"/><rect x="2" y="4" width="5" height="1" fill="#000"/><rect x="4" y="2" width="1" height="5" fill="#000"/></svg>
<svg class="a" style="left:45px;top:194px" width="13" height="11" viewBox="0 0 13 11" shape-rendering="crispEdges"><rect x="2" y="0" width="4" height="1" fill="#8e8600"/><rect x="1" y="1" width="6" height="1" fill="#e8d56a"/><rect x="1" y="1" width="1" height="1" fill="#8e8a40"/><rect x="6" y="1" width="1" height="1" fill="#8e8a40"/><rect x="0" y="2" width="13" height="9" fill="#8e8600"/><rect x="1" y="3" width="11" height="7" fill="url(#fc)"/><rect x="1" y="10" width="12" height="1" fill="#5e5a2c"/><rect x="12" y="3" width="1" height="8" fill="#6a6428"/></svg>
<div class="t" style="left:65px;top:195px;font-size:12px;letter-spacing:0.46px">Triggers</div>
<div class="a" style="left:37px;top:218px;width:7px;height:1px;background-image:linear-gradient(90deg,#8c8c8c 50%,transparent 50%);background-size:2px 1px"></div>
<svg class="a" style="left:28px;top:214px" width="9" height="9" viewBox="0 0 9 9"><rect x=".5" y=".5" width="8" height="8" rx="1.5" fill="url(#tg)" stroke="#8c8c8c"/><rect x="2" y="4" width="5" height="1" fill="#000"/><rect x="4" y="2" width="1" height="5" fill="#000"/></svg>
<svg class="a" style="left:45px;top:212px" width="13" height="11" viewBox="0 0 13 11" shape-rendering="crispEdges"><rect x="2" y="0" width="4" height="1" fill="#8e8600"/><rect x="1" y="1" width="6" height="1" fill="#e8d56a"/><rect x="1" y="1" width="1" height="1" fill="#8e8a40"/><rect x="6" y="1" width="1" height="1" fill="#8e8a40"/><rect x="0" y="2" width="13" height="9" fill="#8e8600"/><rect x="1" y="3" width="11" height="7" fill="url(#fc)"/><rect x="1" y="10" width="12" height="1" fill="#5e5a2c"/><rect x="12" y="3" width="1" height="8" fill="#6a6428"/></svg>
<div class="t" style="left:65px;top:213px;font-size:12px;letter-spacing:0.23px">Indexes</div>
<div class="a" style="left:37px;top:236px;width:7px;height:1px;background-image:linear-gradient(90deg,#8c8c8c 50%,transparent 50%);background-size:2px 1px"></div>
<svg class="a" style="left:28px;top:232px" width="9" height="9" viewBox="0 0 9 9"><rect x=".5" y=".5" width="8" height="8" rx="1.5" fill="url(#tg)" stroke="#8c8c8c"/><rect x="2" y="4" width="5" height="1" fill="#000"/><rect x="4" y="2" width="1" height="5" fill="#000"/></svg>
<svg class="a" style="left:45px;top:230px" width="13" height="11" viewBox="0 0 13 11" shape-rendering="crispEdges"><rect x="2" y="0" width="4" height="1" fill="#8e8600"/><rect x="1" y="1" width="6" height="1" fill="#e8d56a"/><rect x="1" y="1" width="1" height="1" fill="#8e8a40"/><rect x="6" y="1" width="1" height="1" fill="#8e8a40"/><rect x="0" y="2" width="13" height="9" fill="#8e8600"/><rect x="1" y="3" width="11" height="7" fill="url(#fc)"/><rect x="1" y="10" width="12" height="1" fill="#5e5a2c"/><rect x="12" y="3" width="1" height="8" fill="#6a6428"/></svg>
<div class="t" style="left:65px;top:231px;font-size:12px;letter-spacing:0.32px">Constraints</div>
<div class="a" style="left:37px;top:254px;width:7px;height:1px;background-image:linear-gradient(90deg,#8c8c8c 50%,transparent 50%);background-size:2px 1px"></div>
<svg class="a" style="left:28px;top:250px" width="9" height="9" viewBox="0 0 9 9"><rect x=".5" y=".5" width="8" height="8" rx="1.5" fill="url(#tg)" stroke="#8c8c8c"/><rect x="2" y="4" width="5" height="1" fill="#000"/><rect x="4" y="2" width="1" height="5" fill="#000"/></svg>
<svg class="a" style="left:45px;top:248px" width="13" height="11" viewBox="0 0 13 11" shape-rendering="crispEdges"><rect x="2" y="0" width="4" height="1" fill="#8e8600"/><rect x="1" y="1" width="6" height="1" fill="#e8d56a"/><rect x="1" y="1" width="1" height="1" fill="#8e8a40"/><rect x="6" y="1" width="1" height="1" fill="#8e8a40"/><rect x="0" y="2" width="13" height="9" fill="#8e8600"/><rect x="1" y="3" width="11" height="7" fill="url(#fc)"/><rect x="1" y="10" width="12" height="1" fill="#5e5a2c"/><rect x="12" y="3" width="1" height="8" fill="#6a6428"/></svg>
<div class="t" style="left:65px;top:249px;font-size:12px;letter-spacing:0.5px">Sequences</div>
<div class="a" style="left:37px;top:272px;width:7px;height:1px;background-image:linear-gradient(90deg,#8c8c8c 50%,transparent 50%);background-size:2px 1px"></div>
<svg class="a" style="left:28px;top:268px" width="9" height="9" viewBox="0 0 9 9"><rect x=".5" y=".5" width="8" height="8" rx="1.5" fill="url(#tg)" stroke="#8c8c8c"/><rect x="2" y="4" width="5" height="1" fill="#000"/><rect x="4" y="2" width="1" height="5" fill="#000"/></svg>
<svg class="a" style="left:45px;top:266px" width="13" height="11" viewBox="0 0 13 11" shape-rendering="crispEdges"><rect x="2" y="0" width="4" height="1" fill="#8e8600"/><rect x="1" y="1" width="6" height="1" fill="#e8d56a"/><rect x="1" y="1" width="1" height="1" fill="#8e8a40"/><rect x="6" y="1" width="1" height="1" fill="#8e8a40"/><rect x="0" y="2" width="13" height="9" fill="#8e8600"/><rect x="1" y="3" width="11" height="7" fill="url(#fc)"/><rect x="1" y="10" width="12" height="1" fill="#5e5a2c"/><rect x="12" y="3" width="1" height="8" fill="#6a6428"/></svg>
<div class="t" style="left:65px;top:267px;font-size:12px;letter-spacing:0.45px">Tablespaces</div>
<div class="a" style="left:37px;top:290px;width:7px;height:1px;background-image:linear-gradient(90deg,#8c8c8c 50%,transparent 50%);background-size:2px 1px"></div>
<svg class="a" style="left:28px;top:286px" width="9" height="9" viewBox="0 0 9 9"><rect x=".5" y=".5" width="8" height="8" rx="1.5" fill="url(#tg)" stroke="#8c8c8c"/><rect x="2" y="4" width="5" height="1" fill="#000"/><rect x="4" y="2" width="1" height="5" fill="#000"/></svg>
<svg class="a" style="left:45px;top:284px" width="13" height="11" viewBox="0 0 13 11" shape-rendering="crispEdges"><rect x="2" y="0" width="4" height="1" fill="#8e8600"/><rect x="1" y="1" width="6" height="1" fill="#e8d56a"/><rect x="1" y="1" width="1" height="1" fill="#8e8a40"/><rect x="6" y="1" width="1" height="1" fill="#8e8a40"/><rect x="0" y="2" width="13" height="9" fill="#8e8600"/><rect x="1" y="3" width="11" height="7" fill="url(#fc)"/><rect x="1" y="10" width="12" height="1" fill="#5e5a2c"/><rect x="12" y="3" width="1" height="8" fill="#6a6428"/></svg>
<div class="t" style="left:65px;top:285px;font-size:12px;letter-spacing:0.4px">Buffer Pools</div>
<div class="a" style="left:17px;top:308px;width:7px;height:1px;background-image:linear-gradient(90deg,#8c8c8c 50%,transparent 50%);background-size:2px 1px"></div>
<svg class="a" style="left:8px;top:304px" width="9" height="9" viewBox="0 0 9 9"><rect x=".5" y=".5" width="8" height="8" rx="1.5" fill="url(#tg)" stroke="#8c8c8c"/><rect x="2" y="4" width="5" height="1" fill="#000"/><rect x="4" y="2" width="1" height="5" fill="#000"/></svg>
<svg class="a" style="left:25px;top:302px" width="13" height="11" viewBox="0 0 13 11" shape-rendering="crispEdges"><rect x="2" y="0" width="4" height="1" fill="#8e8600"/><rect x="1" y="1" width="6" height="1" fill="#e8d56a"/><rect x="1" y="1" width="1" height="1" fill="#8e8a40"/><rect x="6" y="1" width="1" height="1" fill="#8e8a40"/><rect x="0" y="2" width="13" height="9" fill="#8e8600"/><rect x="1" y="3" width="11" height="7" fill="url(#fc)"/><rect x="1" y="10" width="12" height="1" fill="#5e5a2c"/><rect x="12" y="3" width="1" height="8" fill="#6a6428"/></svg>
<div class="t" style="left:45px;top:303px;font-size:12px;letter-spacing:0px">NEW_SCHEMA</div>
<div class="a" style="left:17px;top:326px;width:7px;height:1px;background-image:linear-gradient(90deg,#8c8c8c 50%,transparent 50%);background-size:2px 1px"></div>
<svg class="a" style="left:8px;top:322px" width="9" height="9" viewBox="0 0 9 9"><rect x=".5" y=".5" width="8" height="8" rx="1.5" fill="url(#tg)" stroke="#8c8c8c"/><rect x="2" y="4" width="5" height="1" fill="#000"/><rect x="4" y="2" width="1" height="5" fill="#000"/></svg>
<svg class="a" style="left:25px;top:320px" width="13" height="11" viewBox="0 0 13 11" shape-rendering="crispEdges"><rect x="2" y="0" width="4" height="1" fill="#8e8600"/><rect x="1" y="1" width="6" height="1" fill="#e8d56a"/><rect x="1" y="1" width="1" height="1" fill="#8e8a40"/><rect x="6" y="1" width="1" height="1" fill="#8e8a40"/><rect x="0" y="2" width="13" height="9" fill="#8e8600"/><rect x="1" y="3" width="11" height="7" fill="url(#fc)"/><rect x="1" y="10" width="12" height="1" fill="#5e5a2c"/><rect x="12" y="3" width="1" height="8" fill="#6a6428"/></svg>
<div class="t" style="left:45px;top:321px;font-size:12px;letter-spacing:-0.39px">NULLID</div>
<div class="a" style="left:17px;top:344px;width:7px;height:1px;background-image:linear-gradient(90deg,#8c8c8c 50%,transparent 50%);background-size:2px 1px"></div>
<svg class="a" style="left:8px;top:340px" width="9" height="9" viewBox="0 0 9 9"><rect x=".5" y=".5" width="8" height="8" rx="1.5" fill="url(#tg)" stroke="#8c8c8c"/><rect x="2" y="4" width="5" height="1" fill="#000"/><rect x="4" y="2" width="1" height="5" fill="#000"/></svg>
<svg class="a" style="left:25px;top:338px" width="13" height="11" viewBox="0 0 13 11" shape-rendering="crispEdges"><rect x="2" y="0" width="4" height="1" fill="#8e8600"/><rect x="1" y="1" width="6" height="1" fill="#e8d56a"/><rect x="1" y="1" width="1" height="1" fill="#8e8a40"/><rect x="6" y="1" width="1" height="1" fill="#8e8a40"/><rect x="0" y="2" width="13" height="9" fill="#8e8600"/><rect x="1" y="3" width="11" height="7" fill="url(#fc)"/><rect x="1" y="10" width="12" height="1" fill="#5e5a2c"/><rect x="12" y="3" width="1" height="8" fill="#6a6428"/></svg>
<div class="t" style="left:45px;top:339px;font-size:12px;letter-spacing:0.13px">PARTTIME</div>
<div class="a" style="left:17px;top:362px;width:7px;height:1px;background-image:linear-gradient(90deg,#8c8c8c 50%,transparent 50%);background-size:2px 1px"></div>
<svg class="a" style="left:8px;top:358px" width="9" height="9" viewBox="0 0 9 9"><rect x=".5" y=".5" width="8" height="8" rx="1.5" fill="url(#tg)" stroke="#8c8c8c"/><rect x="2" y="4" width="5" height="1" fill="#000"/><rect x="4" y="2" width="1" height="5" fill="#000"/></svg>
<svg class="a" style="left:25px;top:356px" width="13" height="11" viewBox="0 0 13 11" shape-rendering="crispEdges"><rect x="2" y="0" width="4" height="1" fill="#8e8600"/><rect x="1" y="1" width="6" height="1" fill="#e8d56a"/><rect x="1" y="1" width="1" height="1" fill="#8e8a40"/><rect x="6" y="1" width="1" height="1" fill="#8e8a40"/><rect x="0" y="2" width="13" height="9" fill="#8e8600"/><rect x="1" y="3" width="11" height="7" fill="url(#fc)"/><rect x="1" y="10" width="12" height="1" fill="#5e5a2c"/><rect x="12" y="3" width="1" height="8" fill="#6a6428"/></svg>
<div class="t" style="left:45px;top:357px;font-size:12px;letter-spacing:-0.13px">REGULAR</div>
<div class="a" style="left:17px;top:380px;width:7px;height:1px;background-image:linear-gradient(90deg,#8c8c8c 50%,transparent 50%);background-size:2px 1px"></div>
<svg class="a" style="left:8px;top:376px" width="9" height="9" viewBox="0 0 9 9"><rect x=".5" y=".5" width="8" height="8" rx="1.5" fill="url(#tg)" stroke="#8c8c8c"/><rect x="2" y="4" width="5" height="1" fill="#000"/><rect x="4" y="2" width="1" height="5" fill="#000"/></svg>
<svg class="a" style="left:25px;top:374px" width="13" height="11" viewBox="0 0 13 11" shape-rendering="crispEdges"><rect x="2" y="0" width="4" height="1" fill="#8e8600"/><rect x="1" y="1" width="6" height="1" fill="#e8d56a"/><rect x="1" y="1" width="1" height="1" fill="#8e8a40"/><rect x="6" y="1" width="1" height="1" fill="#8e8a40"/><rect x="0" y="2" width="13" height="9" fill="#8e8600"/><rect x="1" y="3" width="11" height="7" fill="url(#fc)"/><rect x="1" y="10" width="12" height="1" fill="#5e5a2c"/><rect x="12" y="3" width="1" height="8" fill="#6a6428"/></svg>
<div class="t" style="left:45px;top:375px;font-size:12px;letter-spacing:-0.13px">SQLJ</div>
<div class="a" style="left:17px;top:398px;width:7px;height:1px;background-image:linear-gradient(90deg,#8c8c8c 50%,transparent 50%);background-size:2px 1px"></div>
<svg class="a" style="left:8px;top:394px" width="9" height="9" viewBox="0 0 9 9"><rect x=".5" y=".5" width="8" height="8" rx="1.5" fill="url(#tg)" stroke="#8c8c8c"/><rect x="2" y="4" width="5" height="1" fill="#000"/><rect x="4" y="2" width="1" height="5" fill="#000"/></svg>
<svg class="a" style="left:25px;top:392px" width="13" height="11" viewBox="0 0 13 11" shape-rendering="crispEdges"><rect x="2" y="0" width="4" height="1" fill="#8e8600"/><rect x="1" y="1" width="6" height="1" fill="#e8d56a"/><rect x="1" y="1" width="1" height="1" fill="#8e8a40"/><rect x="6" y="1" width="1" height="1" fill="#8e8a40"/><rect x="0" y="2" width="13" height="9" fill="#8e8600"/><rect x="1" y="3" width="11" height="7" fill="url(#fc)"/><rect x="1" y="10" width="12" height="1" fill="#5e5a2c"/><rect x="12" y="3" width="1" height="8" fill="#6a6428"/></svg>
<div class="t" style="left:45px;top:393px;font-size:12px;letter-spacing:0.2px">SYSCAT</div>
<div class="a" style="left:17px;top:416px;width:7px;height:1px;background-image:linear-gradient(90deg,#8c8c8c 50%,transparent 50%);background-size:2px 1px"></div>
<svg class="a" style="left:8px;top:412px" width="9" height="9" viewBox="0 0 9 9"><rect x=".5" y=".5" width="8" height="8" rx="1.5" fill="url(#tg)" stroke="#8c8c8c"/><rect x="2" y="4" width="5" height="1" fill="#000"/><rect x="4" y="2" width="1" height="5" fill="#000"/></svg>
<svg class="a" style="left:25px;top:410px" width="13" height="11" viewBox="0 0 13 11" shape-rendering="crispEdges"><rect x="2" y="0" width="4" height="1" fill="#8e8600"/><rect x="1" y="1" width="6" height="1" fill="#e8d56a"/><rect x="1" y="1" width="1" height="1" fill="#8e8a40"/><rect x="6" y="1" width="1" height="1" fill="#8e8a40"/><rect x="0" y="2" width="13" height="9" fill="#8e8600"/><rect x="1" y="3" width="11" height="7" fill="url(#fc)"/><rect x="1" y="10" width="12" height="1" fill="#5e5a2c"/><rect x="12" y="3" width="1" height="8" fill="#6a6428"/></svg>
<div class="t" style="left:45px;top:411px;font-size:12px;letter-spacing:0.15px">SYSFUN</div>
<div class="a" style="left:17px;top:434px;width:7px;height:1px;background-image:linear-gradient(90deg,#8c8c8c 50%,transparent 50%);background-size:2px 1px"></div>
<svg class="a" style="left:8px;top:430px" width="9" height="9" viewBox="0 0 9 9"><rect x=".5" y=".5" width="8" height="8" rx="1.5" fill="url(#tg)" stroke="#8c8c8c"/><rect x="2" y="4" width="5" height="1" fill="#000"/><rect x="4" y="2" width="1" height="5" fill="#000"/></svg>
<svg class="a" style="left:25px;top:428px" width="13" height="11" viewBox="0 0 13 11" shape-rendering="crispEdges"><rect x="2" y="0" width="4" height="1" fill="#8e8600"/><rect x="1" y="1" width="6" height="1" fill="#e8d56a"/><rect x="1" y="1" width="1" height="1" fill="#8e8a40"/><rect x="6" y="1" width="1" height="1" fill="#8e8a40"/><rect x="0" y="2" width="13" height="9" fill="#8e8600"/><rect x="1" y="3" width="11" height="7" fill="url(#fc)"/><rect x="1" y="10" width="12" height="1" fill="#5e5a2c"/><rect x="12" y="3" width="1" height="8" fill="#6a6428"/></svg>
<div class="t" style="left:45px;top:429px;font-size:12px;letter-spacing:-0.13px">SYSIBM</div>
<div class="a" style="left:17px;top:452px;width:7px;height:1px;background-image:linear-gradient(90deg,#8c8c8c 50%,transparent 50%);background-size:2px 1px"></div>
<svg class="a" style="left:8px;top:448px" width="9" height="9" viewBox="0 0 9 9"><rect x=".5" y=".5" width="8" height="8" rx="1.5" fill="url(#tg)" stroke="#8c8c8c"/><rect x="2" y="4" width="5" height="1" fill="#000"/><rect x="4" y="2" width="1" height="5" fill="#000"/></svg>
<svg class="a" style="left:25px;top:446px" width="13" height="11" viewBox="0 0 13 11" shape-rendering="crispEdges"><rect x="2" y="0" width="4" height="1" fill="#8e8600"/><rect x="1" y="1" width="6" height="1" fill="#e8d56a"/><rect x="1" y="1" width="1" height="1" fill="#8e8a40"/><rect x="6" y="1" width="1" height="1" fill="#8e8a40"/><rect x="0" y="2" width="13" height="9" fill="#8e8600"/><rect x="1" y="3" width="11" height="7" fill="url(#fc)"/><rect x="1" y="10" width="12" height="1" fill="#5e5a2c"/><rect x="12" y="3" width="1" height="8" fill="#6a6428"/></svg>
<div class="t" style="left:45px;top:447px;font-size:12px;letter-spacing:-0.2px">SYSIBMADM</div>
<div class="a" style="left:17px;top:470px;width:7px;height:1px;background-image:linear-gradient(90deg,#8c8c8c 50%,transparent 50%);background-size:2px 1px"></div>
<svg class="a" style="left:8px;top:466px" width="9" height="9" viewBox="0 0 9 9"><rect x=".5" y=".5" width="8" height="8" rx="1.5" fill="url(#tg)" stroke="#8c8c8c"/><rect x="2" y="4" width="5" height="1" fill="#000"/><rect x="4" y="2" width="1" height="5" fill="#000"/></svg>
<svg class="a" style="left:25px;top:464px" width="13" height="11" viewBox="0 0 13 11" shape-rendering="crispEdges"><rect x="2" y="0" width="4" height="1" fill="#8e8600"/><rect x="1" y="1" width="6" height="1" fill="#e8d56a"/><rect x="1" y="1" width="1" height="1" fill="#8e8a40"/><rect x="6" y="1" width="1" height="1" fill="#8e8a40"/><rect x="0" y="2" width="13" height="9" fill="#8e8600"/><rect x="1" y="3" width="11" height="7" fill="url(#fc)"/><rect x="1" y="10" width="12" height="1" fill="#5e5a2c"/><rect x="12" y="3" width="1" height="8" fill="#6a6428"/></svg>
<div class="t" style="left:45px;top:465px;font-size:12px;letter-spacing:-0.13px">SYSIBMINTERNAL</div>
<div class="a" style="left:17px;top:488px;width:7px;height:1px;background-image:linear-gradient(90deg,#8c8c8c 50%,transparent 50%);background-size:2px 1px"></div>
<svg class="a" style="left:8px;top:484px" width="9" height="9" viewBox="0 0 9 9"><rect x=".5" y=".5" width="8" height="8" rx="1.5" fill="url(#tg)" stroke="#8c8c8c"/><rect x="2" y="4" width="5" height="1" fill="#000"/><rect x="4" y="2" width="1" height="5" fill="#000"/></svg>
<svg class="a" style="left:25px;top:482px" width="13" height="11" viewBox="0 0 13 11" shape-rendering="crispEdges"><rect x="2" y="0" width="4" height="1" fill="#8e8600"/><rect x="1" y="1" width="6" height="1" fill="#e8d56a"/><rect x="1" y="1" width="1" height="1" fill="#8e8a40"/><rect x="6" y="1" width="1" height="1" fill="#8e8a40"/><rect x="0" y="2" width="13" height="9" fill="#8e8600"/><rect x="1" y="3" width="11" height="7" fill="url(#fc)"/><rect x="1" y="10" width="12" height="1" fill="#5e5a2c"/><rect x="12" y="3" width="1" height="8" fill="#6a6428"/></svg>
<div class="t" style="left:45px;top:483px;font-size:12px;letter-spacing:-0.13px">SYSIBMTS</div>
<div class="a" style="left:17px;top:506px;width:7px;height:1px;background-image:linear-gradient(90deg,#8c8c8c 50%,transparent 50%);background-size:2px 1px"></div>
<svg class="a" style="left:8px;top:502px" width="9" height="9" viewBox="0 0 9 9"><rect x=".5" y=".5" width="8" height="8" rx="1.5" fill="url(#tg)" stroke="#8c8c8c"/><rect x="2" y="4" width="5" height="1" fill="#000"/><rect x="4" y="2" width="1" height="5" fill="#000"/></svg>
<svg class="a" style="left:25px;top:500px" width="13" height="11" viewBox="0 0 13 11" shape-rendering="crispEdges"><rect x="2" y="0" width="4" height="1" fill="#8e8600"/><rect x="1" y="1" width="6" height="1" fill="#e8d56a"/><rect x="1" y="1" width="1" height="1" fill="#8e8a40"/><rect x="6" y="1" width="1" height="1" fill="#8e8a40"/><rect x="0" y="2" width="13" height="9" fill="#8e8600"/><rect x="1" y="3" width="11" height="7" fill="url(#fc)"/><rect x="1" y="10" width="12" height="1" fill="#5e5a2c"/><rect x="12" y="3" width="1" height="8" fill="#6a6428"/></svg>
<div class="t" style="left:45px;top:501px;font-size:12px;letter-spacing:-0.13px">SYSPROC</div>
<div class="a" style="left:17px;top:524px;width:7px;height:1px;background-image:linear-gradient(90deg,#8c8c8c 50%,transparent 50%);background-size:2px 1px"></div>
<svg class="a" style="left:8px;top:520px" width="9" height="9" viewBox="0 0 9 9"><rect x=".5" y=".5" width="8" height="8" rx="1.5" fill="url(#tg)" stroke="#8c8c8c"/><rect x="2" y="4" width="5" height="1" fill="#000"/><rect x="4" y="2" width="1" height="5" fill="#000"/></svg>
<svg class="a" style="left:25px;top:518px" width="13" height="11" viewBox="0 0 13 11" shape-rendering="crispEdges"><rect x="2" y="0" width="4" height="1" fill="#8e8600"/><rect x="1" y="1" width="6" height="1" fill="#e8d56a"/><rect x="1" y="1" width="1" height="1" fill="#8e8a40"/><rect x="6" y="1" width="1" height="1" fill="#8e8a40"/><rect x="0" y="2" width="13" height="9" fill="#8e8600"/><rect x="1" y="3" width="11" height="7" fill="url(#fc)"/><rect x="1" y="10" width="12" height="1" fill="#5e5a2c"/><rect x="12" y="3" width="1" height="8" fill="#6a6428"/></svg>
<div class="t" style="left:45px;top:519px;font-size:12px;letter-spacing:-0.13px">SYSPUBLIC</div>
<div class="a" style="left:17px;top:542px;width:7px;height:1px;background-image:linear-gradient(90deg,#8c8c8c 50%,transparent 50%);background-size:2px 1px"></div>
<svg class="a" style="left:8px;top:538px" width="9" height="9" viewBox="0 0 9 9"><rect x=".5" y=".5" width="8" height="8" rx="1.5" fill="url(#tg)" stroke="#8c8c8c"/><rect x="2" y="4" width="5" height="1" fill="#000"/><rect x="4" y="2" width="1" height="5" fill="#000"/></svg>
<svg class="a" style="left:25px;top:536px" width="13" height="11" viewBox="0 0 13 11" shape-rendering="crispEdges"><rect x="2" y="0" width="4" height="1" fill="#8e8600"/><rect x="1" y="1" width="6" height="1" fill="#e8d56a"/><rect x="1" y="1" width="1" height="1" fill="#8e8a40"/><rect x="6" y="1" width="1" height="1" fill="#8e8a40"/><rect x="0" y="2" width="13" height="9" fill="#8e8600"/><rect x="1" y="3" width="11" height="7" fill="url(#fc)"/><rect x="1" y="10" width="12" height="1" fill="#5e5a2c"/><rect x="12" y="3" width="1" height="8" fill="#6a6428"/></svg>
<div class="t" style="left:45px;top:537px;font-size:12px;letter-spacing:-0.13px">SYSSTAT</div>
<div class="a" style="left:17px;top:560px;width:7px;height:1px;background-image:linear-gradient(90deg,#8c8c8c 50%,transparent 50%);background-size:2px 1px"></div>
<svg class="a" style="left:8px;top:556px" width="9" height="9" viewBox="0 0 9 9"><rect x=".5" y=".5" width="8" height="8" rx="1.5" fill="url(#tg)" stroke="#8c8c8c"/><rect x="2" y="4" width="5" height="1" fill="#000"/><rect x="4" y="2" width="1" height="5" fill="#000"/></svg>
<svg class="a" style="left:25px;top:554px" width="13" height="11" viewBox="0 0 13 11" shape-rendering="crispEdges"><rect x="2" y="0" width="4" height="1" fill="#8e8600"/><rect x="1" y="1" width="6" height="1" fill="#e8d56a"/><rect x="1" y="1" width="1" height="1" fill="#8e8a40"/><rect x="6" y="1" width="1" height="1" fill="#8e8a40"/><rect x="0" y="2" width="13" height="9" fill="#8e8600"/><rect x="1" y="3" width="11" height="7" fill="url(#fc)"/><rect x="1" y="10" width="12" height="1" fill="#5e5a2c"/><rect x="12" y="3" width="1" height="8" fill="#6a6428"/></svg>
<div class="t" style="left:45px;top:555px;font-size:12px;letter-spacing:-0.13px">SYSTOOLS</div>
</div>
<div class="a" style="left:306px;top:107px;width:16px;height:558px;background:#dcdcdc;border-left:1px solid #8a8a8a;border-right:1px solid #8a8a8a"></div>
<div class="a" style="left:306px;top:107px;width:16px;height:15px;border:1px solid #8a8a8a;background:linear-gradient(135deg,#fff,#d0d0d0)"></div>
<svg class="a" style="left:308px;top:111px" width="11" height="7"><path d="M1.5 5.5L5.5 1.5L9.5 5.5Z" fill="#000"/></svg>
<div class="a" style="left:306px;top:650px;width:16px;height:15px;border:1px solid #8a8a8a;background:linear-gradient(135deg,#fff,#d0d0d0)"></div>
<svg class="a" style="left:308px;top:654px" width="11" height="7"><path d="M1.5 1.5H9.5L5.5 5.5Z" fill="#000"/></svg>
<div class="a" style="left:8px;top:665px;width:315px;height:16px;background:#dcdcdc;border-top:1px solid #7a7a7a;border-bottom:1px solid #8a8a8a"></div>
<div class="a" style="left:8px;top:665px;width:16px;height:16px;border:1px solid #8a8a8a;background:linear-gradient(135deg,#fff,#d0d0d0)"></div>
<svg class="a" style="left:13px;top:668px" width="6" height="10"><path d="M5.500 .5V9.500L.5 5Z" fill="#000"/></svg>
<div class="a" style="left:4px;top:681px;width:400px;height:2px;background:#dcdcdc"></div>
<div class="a" style="left:323px;top:105px;width:7px;height:578px;background:linear-gradient(90deg,#fff,#dcdcdc)"></div>
<div class="a" style="left:330px;top:105px;width:813px;height:256px;background:#fff;border-left:3px solid #6e6e6e;border-top:2px solid #6e6e6e;border-bottom:1px solid #606060"></div>
<div class="a" style="left:333px;top:107px;width:22px;height:253px;background:#dcdcdc"></div>
<div class="a" style="left:360px;top:107px;width:766px;height:15px;background:#e0e0e0"></div>
<div class="t" style="left:347.5px;top:110px;font-size:12px;color:#f00000;font-family:'DejaVu Sans Mono','Liberation Mono',monospace">1</div>
<div class="a" style="left:1126px;top:107px;width:16px;height:252px;background:#dcdcdc;border-left:1px solid #8a8a8a;border-right:1px solid #8a8a8a"></div>
<div class="a" style="left:1126px;top:107px;width:16px;height:15px;border:1px solid #8a8a8a;background:linear-gradient(135deg,#fff,#d0d0d0)"></div>
<svg class="a" style="left:1128px;top:111px" width="11" height="7"><path d="M1.5 5.5L5.5 1.5L9.5 5.5Z" fill="#000"/></svg>
<div class="a" style="left:1126px;top:344px;width:16px;height:15px;border:1px solid #8a8a8a;background:linear-gradient(135deg,#fff,#d0d0d0)"></div>
<svg class="a" style="left:1128px;top:348px" width="11" height="7"><path d="M1.5 1.5H9.5L5.5 5.5Z" fill="#000"/></svg>
<div class="a" style="left:333px;top:361px;width:804px;height:14px;background:#dcdcdc"></div>
<div class="a" style="left:1121px;top:360px;width:16px;height:16px;border:1px solid #8a8a8a;background:linear-gradient(135deg,#fff,#d0d0d0)"></div>
<svg class="a" style="left:1127px;top:364px" width="6" height="10"><path d="M1 1V9L5 5Z" fill="#000"/></svg>
<div class="a" style="left:333px;top:375px;width:805px;height:1px;background:#6a6a6a"></div>
<div class="a" style="left:333px;top:376px;width:805px;height:1px;background:#909090"></div>
<div class="a" style="left:333px;top:377px;width:805px;height:2px;background:#5a5a5a"></div>
<div class="a" style="left:333px;top:379px;width:803px;height:13px;background:#c0c0c0"></div>
<div class="a" style="left:330px;top:392px;width:816px;height:3px;background:#fff"></div>
<div class="a" style="left:1143px;top:107px;width:3px;height:288px;background:#fff"></div>
<div class="t" style="left:535px;top:381px;font-size:9.5px;white-space:pre">0/0</div>
<div class="t" style="left:573px;top:381px;font-size:10px;white-space:pre">Ln. 1 Col. 1</div>
<div class="t" style="left:651px;top:381px;font-size:9.5px;white-space:pre">Lines: 1</div>
<div class="t" style="left:708px;top:381px;font-size:10px;white-space:pre">INSERT</div>
<div class="t" style="left:759px;top:381px;font-size:9.75px;white-space:pre">WRITABLE  \n   UTF8</div>
<div class="t" style="left:875px;top:381px;font-size:9.75px;white-space:pre">Delimiter: ;</div>
<div class="a" style="left:330px;top:400px;width:814px;height:1px;background:#7c7c7c"></div>
<div class="a" style="left:330px;top:401px;width:100px;height:18px;background:#dcdcdc;border-right:1px solid #8c8c8c;border-left:1px solid #f4f4f4"></div>
<svg class="a" style="left:340px;top:407px" width="10" height="10" viewBox="0 0 10 10"><rect x=".5" y=".5" width="9" height="9" rx="1.5" fill="none" stroke="#000"/><path d="M2.5 2.5L7.5 7.5M7.5 2.5L2.5 7.5" stroke="#000" stroke-width="1"/></svg>
<div class="t" style="left:356px;top:404.5px;font-size:12px">MY_TABLE</div>
<div class="a" style="left:430px;top:401px;width:109px;height:18px;background:#dcdcdc;border-right:1px solid #8c8c8c;border-left:1px solid #f4f4f4"></div>
<svg class="a" style="left:440px;top:407px" width="10" height="10" viewBox="0 0 10 10"><rect x=".5" y=".5" width="9" height="9" rx="1.5" fill="none" stroke="#000"/><path d="M2.5 2.5L7.5 7.5M7.5 2.5L2.5 7.5" stroke="#000" stroke-width="1"/></svg>
<div class="t" style="left:456px;top:404.5px;font-size:12px">MY_TABLE 2</div>
<div class="a" style="left:539px;top:401px;width:109px;height:18px;background:#c5d6eb;border-right:1px solid #8c8c8c;border-left:1px solid #f4f4f4"></div>
<svg class="a" style="left:549px;top:407px" width="10" height="10" viewBox="0 0 10 10"><rect x=".5" y=".5" width="9" height="9" rx="1.5" fill="none" stroke="#000"/><path d="M2.5 2.5L7.5 7.5M7.5 2.5L2.5 7.5" stroke="#000" stroke-width="1"/></svg>
<div class="t" style="left:565px;top:404.5px;font-size:12px">MY_TABLE 3</div>
<div class="a" style="left:330px;top:419px;width:813px;height:1px;background:#b9b9b9"></div>
<div class="a" style="left:330px;top:420px;width:813px;height:1px;background:#f2f2f2"></div>
<svg class="a" style="left:413px;top:428px" width="16" height="16" viewBox="0 0 16 16"><rect x="3" y="1" width="12" height="2" fill="#2a64b4"/><rect x="3" y="5" width="12" height="2" fill="#2a64b4"/><rect x="9" y="9" width="6" height="2" fill="#2a64b4"/><path d="M2.5 13.3L10.0 5.0" stroke="#8a6a3a" stroke-width="3.4" stroke-linecap="round"/><path d="M2.7 13.1L10.0 5.0" stroke="#f0c67a" stroke-width="2" stroke-linecap="round"/><path d="M1.5 14.5L2.1 13.8" stroke="#1e3a6e" stroke-width="1.6" stroke-linecap="round"/></svg><svg class="a" style="left:451px;top:427px" width="17" height="17" viewBox="0 0 17 17"><path d="M10 1L6 5L10 9V6.800Q12.500 6.800 13 10L15.200 10Q15.200 3.400 10 3.200Z" fill="#dff2df" stroke="#0db010" stroke-width="1.300" stroke-linejoin="round"/><path d="M6.500 16L10.500 12L6.500 8V10.200Q4 10.200 3.500 7L1.300 7Q1.300 13.600 6.500 13.800Z" fill="#dff2df" stroke="#0db010" stroke-width="1.300" stroke-linejoin="round"/></svg><svg class="a" style="left:474px;top:428px" width="18" height="12" viewBox="0 0 18 12"><rect x="1.600" y="6.200" width="5.400" height="4.800" rx="1.600" fill="#f2fbff" stroke="#1e3a5e" stroke-width="1.200"/><rect x="9" y="6.200" width="5.400" height="4.800" rx="1.600" fill="#f2fbff" stroke="#1e3a5e" stroke-width="1.200"/><path d="M7 7.800H9" stroke="#1e3a5e" stroke-width="1.100"/><path d="M1.800 6.800L5.500 2.600Q7.200 1.700 7.500 4.200M14.200 6.500L15.200 4Q16.800 2.400 17 5" fill="none" stroke="#1e3a5e" stroke-width="1.100"/></svg><svg class="a" style="left:499px;top:428px" width="17" height="15" viewBox="0 0 17 15"><path d="M2.5 8.3L9.5 1.5" stroke="#8a6a3a" stroke-width="3.4" stroke-linecap="round"/><path d="M2.7 8.1L9.5 1.5" stroke="#f0c67a" stroke-width="2" stroke-linecap="round"/><path d="M1.5 9.5L2.1 8.8" stroke="#1e3a6e" stroke-width="1.6" stroke-linecap="round"/><g transform="translate(7,6)"><path d="M.5 2.4H4.8V.7L8.9 4.0L4.8 7.3V5.6H.5Z" fill="#8cc6d6" stroke="#2e6cb4" stroke-width="0.9" stroke-linejoin="round"/></g></svg><svg class="a" style="left:523px;top:429px" width="17" height="13" viewBox="0 0 17 13"><g transform="translate(.8,2.300)"><path d="M.5 2.2H3.8V.7L7.8 3.5L3.8 6.3V4.8H.5Z" fill="url(#gYel)" stroke="#c4880e" stroke-width="0.8" stroke-linejoin="round"/></g><path d="M10.500 4V10.500M10.500 6.500H13.500M10.500 10.500H13.500M13.500 2.500H16" fill="none" stroke="#4a6aa8" stroke-width="1.100"/><rect x="9.500" y="1.500" width="2.600" height="2.600" fill="#dfe8f8" stroke="#4a6aa8" stroke-width="1.100"/><rect x="13.500" y="5.300" width="2.600" height="2.600" fill="#dfe8f8" stroke="#4a6aa8" stroke-width="1.100"/><rect x="13.500" y="9.300" width="2.600" height="2.600" fill="#dfe8f8" stroke="#4a6aa8" stroke-width="1.100"/></svg><svg class="a" style="left:547px;top:427px" width="18" height="17" viewBox="0 0 18 17"><g transform="translate(.5,1.300) rotate(90 4.500 4.200)"><path d="M.5 2.9H4.5V.7L8.4 4.2L4.5 7.7V5.5H.5Z" fill="url(#gYel)" stroke="#c4880e" stroke-width="0.8" stroke-linejoin="round"/></g><g transform="translate(8,6.300) rotate(-90 4.500 4.200)"><path d="M.5 2.9H4.5V.7L8.4 4.2L4.5 7.7V5.5H.5Z" fill="url(#gYel)" stroke="#c4880e" stroke-width="0.8" stroke-linejoin="round"/></g></svg><svg class="a" style="left:572px;top:427px" width="15" height="16" viewBox="0 0 15 16"><path d="M4.5 2.5H11.5L14.5 5.5V15.5H4.5Z" fill="#fff" stroke="#b4944c"/><path d="M11.5 2.5V5.5H14.5" fill="#f4e8c8" stroke="#b4944c" stroke-width=".8"/><path d="M9 8.5H13M9 10.5H13M9 12.5H13" stroke="#9ab8dc"/><rect x=".5" y=".5" width="8" height="4" fill="#fff" stroke="#2e6cb4"/><path d="M2 2.5H3M4 2.5H5M6 2.5H7" stroke="#2e6cb4"/><path d="M1.5 6Q1.5 10 6 10V12L10 8.5L6 5.5V7.5Q4 7.5 3.5 6Z" fill="url(#gTeal)" stroke="#2468ac" stroke-width=".9" stroke-linejoin="round"/></svg><svg class="a" style="left:594px;top:428px" width="16" height="16" viewBox="0 0 16 16"><rect x="3" y="1" width="12" height="2" fill="#2a64b4"/><rect x="3" y="5" width="12" height="2" fill="#2a64b4"/><rect x="9" y="9" width="6" height="2" fill="#2a64b4"/><path d="M4.5 7.9L5.6 10.4L8.1 11.5L5.6 12.6L4.5 15.1L3.4 12.6L0.9 11.5L3.4 10.4Z" fill="#f4c23c" stroke="#b8861a" stroke-width=".8"/><circle cx="4.5" cy="11.5" r="1" fill="#fff8d8"/></svg><svg class="a" style="left:621px;top:428px" width="13" height="15" viewBox="0 0 13 15" shape-rendering="crispEdges"><rect x=".5" y=".5" width="12" height="6" fill="#eef6f2" stroke="#c8b888"/><rect x="2" y="2" width="3" height="3" fill="#2e9e3e"/><rect x="6" y="3" width="5" height="1" fill="#3aa84a"/><rect x=".5" y="8.5" width="12" height="6" fill="#eaf0f8" stroke="#8ea4c6"/><rect x="2" y="10" width="3" height="3" fill="#5e6ea4"/><rect x="6" y="11" width="5" height="1" fill="#6a7ab0"/></svg><svg class="a" style="left:644px;top:428px" width="14" height="14" viewBox="0 0 14 14"><rect x=".5" y=".5" width="13" height="13" fill="#f8fbff" stroke="#7a90c0"/><path d="M1 1H5.5L1 5.5Z" fill="#1c3c6c"/><path d="M6 4.5H12M5 6.5H12M5 8.5H12M5 10.5H12" stroke="#8ea4cc"/></svg><svg class="a" style="left:668px;top:428px" width="15" height="15" viewBox="0 0 15 15"><rect x=".5" y=".5" width="9" height="11" fill="#fdfcf6" stroke="#b8a070"/><path d="M2 3.5H8M2 5.5H8M2 7.5H8" stroke="#7aa0d0"/><path d="M4.5 2.5H11.5L14.5 5.5V14.5H4.5Z" fill="#fff" stroke="#b8a070"/><path d="M6.5 6.5H12.5M6.5 8.5H12.5M6.5 10.5H12.5M6.5 12.5H12.5" stroke="#5a8ccc"/></svg><svg class="a" style="left:691px;top:427px" width="16" height="16" viewBox="0 0 16 16"><rect x=".5" y="2.5" width="8" height="8" fill="#f4f8ff" stroke="#9aa6be"/><path d="M2 4.5H3M4.5 4.5H7M2 6.5H3M4.5 6.5H7M2 8.5H3M4.5 8.5H7" stroke="#4a6aa8"/><rect x="8.500" y="7.5" width="7" height="8" fill="#f4f8ff" stroke="#9aa6be"/><path d="M10 9.5H11M12 9.5H14M10 11.5H11M12 11.5H14M10 13.5H11M12 13.5H14" stroke="#4a6aa8"/><path d="M9.500 1.500Q13 1.500 13 5M11.5 3.800L13 5.600L14.600 3.800" fill="none" stroke="#2c4a86" stroke-width="1.100"/><path d="M2.500 12Q2.500 15 6 15M4.200 13.400L6.200 15L4.200 16" fill="none" stroke="#2c4a86" stroke-width="1.100"/></svg><svg class="a" style="left:727px;top:427px" width="19" height="17" viewBox="0 0 19 17"><path d="M10 7L14.500 2.500Q16.500 1 17.500 2.500Q18.500 4 17 5.500L12.500 10Z" fill="#f4a848" stroke="#c07c20" stroke-width=".8"/><circle cx="15.800" cy="3.800" r="1" fill="#fff4d0"/><path d="M6.500 10.500L10 7L12.500 10L9 13.500Z" fill="#7c7c84" stroke="#54545c" stroke-width=".8"/><path d="M1.500 14.500Q2.500 10.500 6.500 10.500L9 13.500Q6 16 1.500 14.500Z" fill="#fbe6a0" stroke="#d4a84a" stroke-width=".8"/></svg><svg class="a" style="left:902px;top:427px" width="17" height="15" viewBox="0 0 17 15"><g transform="translate(1,1)"><path d="M.5 3.9H7.5V.7L14.4 6.5L7.5 12.3V9.1H.5Z" fill="url(#gYel)" stroke="#c08a1c" stroke-width="1" stroke-linejoin="round"/></g></svg><svg class="a" style="left:927px;top:426px" width="16" height="18" viewBox="0 0 16 18"><g transform="translate(2,1.500)"><path d="M.5 3.4H6.5V.7L12.4 5.8L6.5 10.8V8.1H.5Z" fill="url(#gYel)" stroke="#c08a1c" stroke-width="1" stroke-linejoin="round"/></g><path d="M3.500 6.500V15.500M1.500 13L3.500 16L5.500 13Z" fill="#2c3c6c" stroke="#2c3c6c" stroke-width="1"/></svg><svg class="a" style="left:949px;top:426px" width="18" height="18" viewBox="0 0 18 18"><path d="M10.500 1.500H15L17.500 4V10.500H10.500Z" fill="#fff" stroke="#a89468"/><path d="M12.500 4.500H13.500M14.500 4.500H15.500M12.500 6.500H13.500M14.500 6.500H15.500M12.500 8.500H13.500" stroke="#5a8ccc"/><path d="M1.500 10.500Q1.500 6 6.500 6V4L11 7.500L6.500 11V9Q4 9 3.800 11.500Z" fill="#5cb848" stroke="#2a8a2e" stroke-linejoin="round"/><rect x="3.500" y="11.500" width="10" height="5" fill="#f4f8ff" stroke="#2e6cb4" stroke-width="1.200"/><path d="M5.500 14H11" stroke="#2e6cb4"/></svg><svg class="a" style="left:975px;top:426px" width="17" height="18" viewBox="0 0 17 18"><path d="M1.500 3.500H11.500V12L8 16.500H1.500Z" fill="#fae474" stroke="#b8981c"/><path d="M8 16.500V12.500H11.500" fill="#fdf4b8" stroke="#b8981c" stroke-width=".8"/><path d="M2.500 1.500V4M4.500 1.500V4M6.500 1.500V4M8.500 1.500V4" stroke="#5a5a3a"/><path d="M3 6.500H9.500M3 8.500H9.500M3 10.500H9.500M3 12.500H7" stroke="#4a5a8a" stroke-width=".9"/><path d="M12.5 0.8L13.6 2.9L15.7 4.0L13.6 5.1L12.5 7.2L11.4 5.1L9.3 4.0L11.4 2.9Z" fill="#f4c23c" stroke="#b8861a" stroke-width=".8"/><circle cx="12.5" cy="4.0" r="1" fill="#fff8d8"/></svg><svg class="a" style="left:998px;top:427px" width="16" height="17" viewBox="0 0 16 17"><rect x="1.500" y="1.500" width="11" height="11" rx="1" fill="url(#gSave)" stroke="#6d8ec4"/><rect x="3.500" y="1.500" width="7" height="5" fill="#f6f8fc" stroke="#8aa4cc" stroke-width=".8"/><rect x="4" y="5" width="6" height="1.200" fill="#e8cf9a"/><rect x="4" y="8.500" width="6" height="4" fill="#f4f6fb" stroke="#7d98c6" stroke-width=".8"/><rect x="5" y="10.500" width="2.500" height="2" fill="#e8c77a"/><path d="M8 14.500H9.500M10.500 14.500H12M13 14.500H14.500" stroke="#3c6cc4" stroke-width="1.600"/></svg><svg class="a" style="left:1023px;top:427px" width="15" height="16" viewBox="0 0 15 16"><g transform="translate(.5,1) rotate(90 7 7)"><path d="M.5 3.9H7.0V.7L13.4 6.5L7.0 12.3V9.1H.5Z" fill="url(#gYel)" stroke="#c08a1c" stroke-width="1" stroke-linejoin="round"/></g></svg><svg class="a" style="left:1045px;top:426px" width="19" height="18" viewBox="0 0 19 18"><g transform="translate(1,.5) rotate(180 6 4.250)"><path d="M.5 2.9H6.6V.7L11.4 4.2L6.6 7.8V5.6H.5Z" fill="url(#gYel)" stroke="#c08a1c" stroke-width="0.9" stroke-linejoin="round"/></g><g transform="translate(5.500,8.500)"><path d="M.5 2.9H6.6V.7L11.4 4.2L6.6 7.8V5.6H.5Z" fill="url(#gYel)" stroke="#c08a1c" stroke-width="0.9" stroke-linejoin="round"/></g></svg>
<div class="a" style="left:749px;top:424px;width:149px;height:22px;background:#fff;border:1px solid #8a8a8a;border-top-color:#6a6a6a;border-left-color:#6a6a6a"></div>
<div class="a" style="left:330px;top:448px;width:813px;height:1px;background:#757575"></div>
<div class="a" style="left:330px;top:449px;width:813px;height:1px;background:#a8a8a8"></div>
<div class="a" style="left:330px;top:450px;width:797px;height:17px;background:#dcdcdc;border-bottom:1px solid #7a7a7a;border-top:1px solid #f4f4f4"></div>
<div class="a" style="left:330px;top:467px;width:796px;height:190px;background:#fff"></div>
<div class="a" style="left:428px;top:451px;width:1px;height:15px;background:#7a7a7a"></div>
<div class="a" style="left:429px;top:451px;width:1px;height:15px;background:#fff"></div>
<div class="t" style="right:724px;top:453px;font-size:12px">NAME</div>
<div class="a" style="left:330px;top:467px;width:99px;height:15px;background:#fff;border-right:1px solid #b4b4b4;border-bottom:1px solid #b4b4b4"></div>
<div class="a" style="left:330px;top:483px;width:99px;height:15px;background:#ececec;border-right:1px solid #b4b4b4;border-bottom:1px solid #b4b4b4"></div>
<div class="a" style="left:330px;top:498px;width:99px;height:15px;background:#fff;border-right:1px solid #b4b4b4;border-bottom:1px solid #b4b4b4"></div>
<div class="t" style="right:736px;top:469.5px;font-size:12px">yiibai</div>
<div class="t" style="right:733px;top:484.5px;font-size:12px">kobo</div>
<div class="t" style="right:728px;top:499.5px;font-size:12px">maxsu</div>
<div class="a" style="left:1126px;top:450px;width:16px;height:18px;background:#dcdcdc;border-left:1px solid #8a8a8a"></div>
<div class="a" style="left:1126px;top:468px;width:16px;height:189px;background:#dcdcdc;border-left:1px solid #8a8a8a;border-right:1px solid #8a8a8a"></div>
<div class="a" style="left:1126px;top:468px;width:16px;height:15px;border:1px solid #8a8a8a;background:linear-gradient(135deg,#fff,#d0d0d0)"></div>
<svg class="a" style="left:1128px;top:472px" width="11" height="7"><path d="M1.5 5.5L5.5 1.5L9.5 5.5Z" fill="#000"/></svg>
<div class="a" style="left:1126px;top:642px;width:16px;height:15px;border:1px solid #8a8a8a;background:linear-gradient(135deg,#fff,#d0d0d0)"></div>
<svg class="a" style="left:1128px;top:646px" width="11" height="7"><path d="M1.5 1.5H9.5L5.5 5.5Z" fill="#000"/></svg>
<div class="a" style="left:1141px;top:448px;width:2px;height:211px;background:#6e6e6e"></div>
<div class="a" style="left:1142px;top:401px;width:1px;height:47px;background:#8a8a8a"></div>
<div class="a" style="left:1143px;top:392px;width:3px;height:292px;background:#fff"></div>
<div class="a" style="left:330px;top:657px;width:813px;height:2px;background:#6a6a6a"></div>
<div class="a" style="left:330px;top:659px;width:816px;height:1px;background:#fff"></div>
<div class="a" style="left:330px;top:660px;width:814px;height:22px;background:#c0c0c0"></div>
<div class="t" style="left:403.7px;top:666.5px;font-size:9.75px;white-space:pre">33:769 Executing Statement . . . Done. Query Time: 0.002   Row Count: 3</div>
<div class="a" style="left:3px;top:682px;width:1143px;height:2px;background:#fff"></div>
<div class="a" style="left:0;top:684px;width:1146px;height:2px;background:linear-gradient(#4a4a5a,#2e2e3a)"></div>
<div class="a" style="left:140px;top:118px;width:6px;height:580px;background:linear-gradient(90deg,rgba(255,255,255,0),rgba(255,255,255,.8))"></div>
<div class="a" style="left:402px;top:121px;width:5px;height:570px;background:linear-gradient(90deg,#8c8c8c,#c4c4c4 30%,#efefef 60%,#f8f8f8)"></div>
<div class="a" style="left:407px;top:121px;width:14px;height:570px;background:linear-gradient(90deg,rgba(0,0,0,.13),rgba(0,0,0,0))"></div>
<div class="a" style="left:146px;top:118px;width:256px;height:580px;background:#dcdcdc;border:1px solid #6e6e6e"></div>
<div class="t pm" style="left:173px;top:127px;color:#000;letter-spacing:0.23px">View Contents</div>
<div class="t pm" style="left:173px;top:149px;color:#000;letter-spacing:0.24px">View Contents (Fetch All Rows)</div>
<div class="a" style="left:149px;top:165px;width:250px;height:22px;background:#546fa6"></div>
<div class="t pm" style="left:173px;top:171px;color:#fff;letter-spacing:0.18px">View Contents (Limit Results)</div>
<svg class="a" style="left:385px;top:172px" width="5" height="9"><path d="M0 0L5 4.5L0 9Z" fill="#fff"/></svg>
<div class="t pm" style="left:173px;top:193px;color:#000;letter-spacing:0.06px">Edit</div>
<div class="t pm" style="left:173px;top:215px;color:#000;letter-spacing:0.38px">Describe</div>
<div class="t pm" style="left:173px;top:237px;color:#000;letter-spacing:0.4px">Table Relationships</div>
<div class="t pm" style="left:173px;top:259px;color:#000;letter-spacing:0.6px">Search</div>
<div class="t pm" style="left:173px;top:281px;color:#000;letter-spacing:0.05px">Copy</div>
<div class="t pm" style="left:173px;top:303px;color:#000;letter-spacing:0.31px">Copy to Another Database</div>
<div class="t pm" style="left:173px;top:325px;color:#000;letter-spacing:0.29px">Copy to Local Database</div>
<svg class="a" style="left:385px;top:326px" width="5" height="9"><path d="M0 0L5 4.5L0 9Z" fill="#000"/></svg>
<div class="t pm" style="left:173px;top:347px;color:#000;letter-spacing:0.47px">Backup</div>
<div class="t pm" style="left:173px;top:369px;color:#000;letter-spacing:0.13px">Show Info</div>
<div class="t pm" style="left:173px;top:391px;color:#000;letter-spacing:0.11px">Row Count</div>
<div class="a" style="left:153px;top:410px;width:243px;height:1px;background:#7a7a7a"></div>
<div class="a" style="left:153px;top:411px;width:243px;height:1px;background:#fff"></div>
<div class="t pm" style="left:173px;top:421px;color:#000;letter-spacing:0.24px">Generate SQL</div>
<svg class="a" style="left:385px;top:422px" width="5" height="9"><path d="M0 0L5 4.5L0 9Z" fill="#000"/></svg>
<div class="t pm" style="left:173px;top:443px;color:#000;letter-spacing:0.22px">Generate DDL</div>
<div class="t pm" style="left:173px;top:465px;color:#000;letter-spacing:0.35px">Database Conversion</div>
<svg class="a" style="left:385px;top:466px" width="5" height="9"><path d="M0 0L5 4.5L0 9Z" fill="#000"/></svg>
<div class="a" style="left:153px;top:484px;width:243px;height:1px;background:#7a7a7a"></div>
<div class="a" style="left:153px;top:485px;width:243px;height:1px;background:#fff"></div>
<div class="t pm" style="left:173px;top:495px;color:#000;letter-spacing:0.5px">Create</div>
<svg class="a" style="left:385px;top:496px" width="5" height="9"><path d="M0 0L5 4.5L0 9Z" fill="#000"/></svg>
<div class="t pm" style="left:173px;top:517px;color:#000;letter-spacing:0.12px">Alter</div>
<div class="t pm" style="left:173px;top:539px;color:#000;letter-spacing:0.42px">Drop</div>
<div class="t pm" style="left:173px;top:561px;color:#000;letter-spacing:0.52px">Drop Tables</div>
<div class="t pm" style="left:173px;top:583px;color:#9a9a9a;letter-spacing:0.38px">Execute</div>
<div class="t pm" style="left:173px;top:605px;color:#000;letter-spacing:0.22px">Import Data</div>
<div class="t pm" style="left:173px;top:627px;color:#000;letter-spacing:0.27px">Export Data</div>
<div class="t pm" style="left:173px;top:649px;color:#000;letter-spacing:0.4px">Export Tables</div>
<div class="t pm" style="left:173px;top:671px;color:#000;letter-spacing:0.07px">Query Builder</div>
<div class="a" style="left:391px;top:154px;width:229px;height:112px;border:3px solid #f23030"></div>
<div class="a" style="left:395px;top:162px;width:203px;height:94px;background:#dcdcdc;border:1px solid #6e6e6e;box-shadow:2px 2px 3px rgba(0,0,0,.55),5px 5px 12px rgba(120,120,120,.3)"></div>
<div class="t pm" style="left:421.3px;top:171px;letter-spacing:.22px">View First 10 Rows</div>
<div class="t pm" style="left:421.3px;top:193px;letter-spacing:.22px">View First 100 Rows</div>
<div class="t pm" style="left:421.3px;top:215px;letter-spacing:.22px">View First 1000 Rows</div>
<div class="t pm" style="left:421.3px;top:237px;letter-spacing:.22px">View First 10000 Rows</div>
</body></html>
